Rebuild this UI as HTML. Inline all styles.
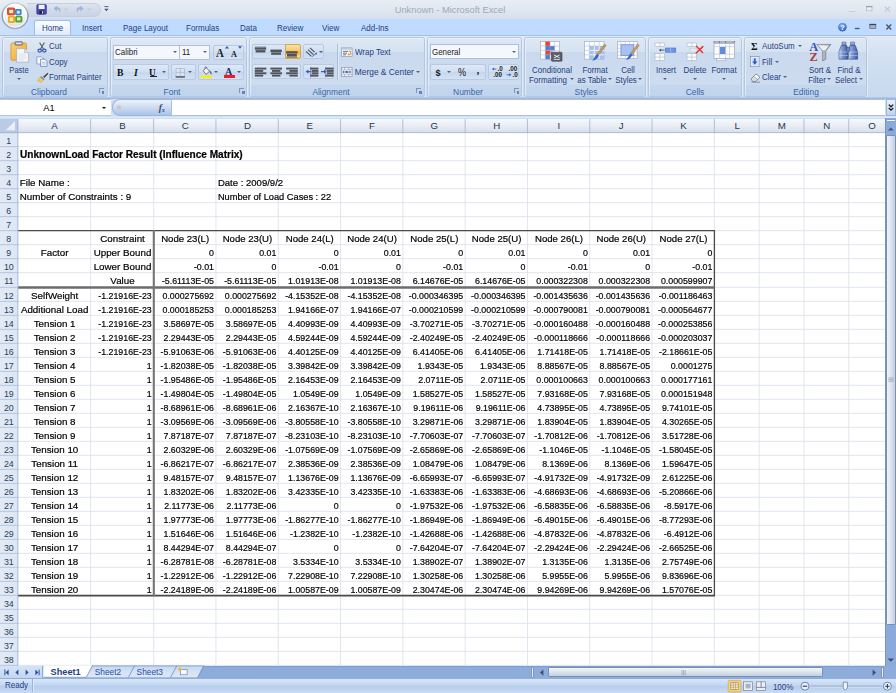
<!DOCTYPE html>
<html lang="en"><head><meta charset="utf-8"><title>Unknown - Microsoft Excel</title>
<style>
html,body{margin:0;padding:0;background:#fff;}
body{width:896px;height:693px;overflow:hidden;font-family:"Liberation Sans",sans-serif;}
#app{position:relative;width:896px;height:693px;overflow:hidden;background:#bfd6f5;font-family:"Liberation Sans",sans-serif;font-size:9.3px;color:#1d3c78;}
#app div,#app span,#app svg{position:absolute;box-sizing:border-box;}
.t{white-space:nowrap;line-height:11px;height:11px;}
.c{text-align:center;}
/* title bar */
#title{left:0;top:0;width:896px;height:19px;background:linear-gradient(#e9eef5,#dfe6f0 60%,#d5dfec);}
#titletxt{left:349.5px;top:4.4px;width:200px;text-align:center;color:#a2a8b3;font-size:9.7px;transform:scaleX(0.965);}
#qat{left:27px;top:2.6px;width:73.8px;height:14px;border-radius:0 7px 7px 0;background:linear-gradient(#dfe5ef,#d1dae8 50%,#cad4e4);border:0.7px solid #c6cfdd;border-left:none;}
/* tab row */
#tabs{left:0;top:18.8px;width:896px;height:17.5px;background:linear-gradient(90deg,#cfe1f9 0,#bfdbff 40px);}
#hometab{left:33.6px;top:19.8px;width:37.2px;height:17px;border-radius:2.5px 2.5px 0 0;background:linear-gradient(#fbfdff,#e9f1fb 60%,#dbe7f6);border:0.7px solid #a3bde0;border-bottom:none;}
.tab{top:23.0px;color:#1e3f82;font-size:8.5px;transform:scaleX(0.94);transform-origin:0 50%;}
/* ribbon */
#ribbon{left:0;top:35.2px;width:896px;height:63.3px;background:linear-gradient(#e0e9f6,#d3e1f2 30%,#c7d9ef);border-top:0.7px solid #a7c0e2;}
#ribbot{left:0;top:97.3px;width:896px;height:2.5px;background:linear-gradient(#c2d5ee 0,#9fb8dd 40%,#a3bbdf 60%,#d9e5f5 85%,#e3edf9);}
.grp{top:37.2px;height:59.8px;border:0.7px solid #b4c8e2;border-radius:2.5px;background:linear-gradient(#dee8f5 0,#d5e2f1 24%,#cad9ed 25%,#cddcef 80%,#c4d7ee 81%,#c0d4ed 100%);box-shadow:0.7px 0 0 #e9f0f9, inset 0.7px 0.7px 0 #edf3fa;}
.glab{top:86.9px;height:10px;line-height:10px;font-size:8.4px;color:#3a64a6;text-align:center;white-space:nowrap;}
.lnch{top:88.0px;width:5.2px;height:5.2px;border-left:0.8px solid #7d95be;border-top:0.8px solid #7d95be;}
.lnch:after{content:"";position:absolute;left:2.0px;top:2.0px;width:2.5px;height:2.5px;background:#6a84b4;}
.box{border:0.7px solid #b7c9e3;border-radius:2px;background:linear-gradient(#dfe9f6,#cfdef1 50%,#c6d7ee 51%,#d3e2f4);}
.wbox{border:0.7px solid #adc1df;background:#fff;}
.arr{width:0;height:0;border-left:2px solid transparent;border-right:2px solid transparent;border-top:2.3px solid #4a5f85;}
.sep{width:0.7px;background:#a9bfdd;box-shadow:0.7px 0 0 #e8f0fa;}
/* formula bar */
#fbar{left:0;top:100px;width:896px;height:19px;background:#cddff5;}
#namebox{left:0;top:99.3px;width:110.8px;height:16.5px;background:#fff;border-top:0.6px solid #b3c7e4;border-bottom:0.6px solid #b3c7e4;}
#fhandle{left:111.5px;top:99.3px;width:59.4px;height:16.5px;border-radius:8px 0 0 8px;background:linear-gradient(#eef3fb,#cfdef2 45%,#a9c4e9);border:0.7px solid #9db5d9;border-right:none;}
#finput{left:170.9px;top:99.3px;width:714.6px;height:16.5px;background:#fff;border:0.7px solid #a9c0e0;border-right:none;}
#fexp{left:885.5px;top:99.3px;width:10.5px;height:16.5px;background:linear-gradient(#e8f0fa,#c0d4ee);border:0.7px solid #9db5d9;}
#fgap{left:0;top:115.7px;width:896px;height:2.2px;background:linear-gradient(#cfe0f5,#e1ebf8);}
/* scrollbars */
#vsb{left:885px;top:117.6px;width:11px;height:548.2px;background:#8ba9da;border-left:0.8px solid #7893c4;}
#vthumb{left:886.3px;top:135px;width:9.7px;height:490px;background:linear-gradient(90deg,#f0f4f9,#dfe6ef 45%,#c5d0df);border:0.7px solid #7b90b6;border-radius:1.5px;}
#tabbar{left:0;top:665.6px;width:885px;height:12.4px;background:#8dabdb;border-top:0.7px solid #7f9ccf;}
#tabnav{left:0;top:665.6px;width:42px;height:12.4px;background:linear-gradient(#d5e3f6,#c3d6ef);}
#hthumb{left:547.5px;top:667.2px;width:275px;height:10px;background:linear-gradient(#f3f6fa,#dde5ee 50%,#c3cfdf);border:0.7px solid #7b90b6;border-radius:1.5px;}
#corner{left:885px;top:665.6px;width:11px;height:12.4px;background:#8dabdb;}
/* status bar */
#status{left:0;top:677.9px;width:896px;height:15.1px;background:linear-gradient(#d9e6f8,#c3d7f1 45%,#b5cdee 50%,#c9dcf4);border-top:0.7px solid #93afd9;}

</style></head>
<body>
<div id="app">
<svg id="grid" width="896" height="693" viewBox="0 0 896 693" style="position:absolute;left:0;top:0" font-family="Liberation Sans, sans-serif">
<defs><linearGradient id="chg" x1="0" y1="0" x2="0" y2="1"><stop offset="0" stop-color="#f9fbfd"/><stop offset="0.55" stop-color="#e8edf5"/><stop offset="1" stop-color="#d6deea"/></linearGradient><linearGradient id="rhg" x1="0" y1="0" x2="1" y2="0"><stop offset="0" stop-color="#e2eaf6"/><stop offset="1" stop-color="#dde6f3"/></linearGradient><filter id="tb" x="-2%" y="-2%" width="104%" height="104%"><feGaussianBlur stdDeviation="0.33"/></filter></defs>
<rect x="0" y="117.6" width="885.0" height="548.1999999999999" fill="#fff"/>
<rect x="0" y="117.6" width="885.0" height="15.400000000000006" fill="url(#chg)"/>
<rect x="0" y="133.0" width="18.2" height="532.8" fill="url(#rhg)"/>
<rect x="0" y="117.6" width="18.2" height="15.400000000000006" fill="#b9cbe6"/>
<path d="M15.0,121.1 L15.0,130.2 L5.799999999999999,130.2 Z" fill="#e9eef7"/>
<path d="M90.65,133.0 V665.8 M153.65,133.0 V665.8 M215.95,133.0 V665.8 M278.25,133.0 V665.8 M340.55,133.0 V665.8 M402.85,133.0 V665.8 M465.15,133.0 V665.8 M527.45,133.0 V665.8 M589.75,133.0 V665.8 M652.05,133.0 V665.8 M714.35,133.0 V665.8 M759.15,133.0 V665.8 M803.95,133.0 V665.8 M848.75,133.0 V665.8 M18.2,146.65 H885.0 M18.2,160.65 H885.0 M18.2,174.65 H885.0 M18.2,188.65 H885.0 M18.2,202.65 H885.0 M18.2,216.65 H885.0 M18.2,230.65 H885.0 M18.2,244.65 H885.0 M18.2,258.65 H885.0 M18.2,272.65 H885.0 M18.2,287.35 H885.0 M18.2,301.35 H885.0 M18.2,315.35 H885.0 M18.2,329.35 H885.0 M18.2,343.35 H885.0 M18.2,357.35 H885.0 M18.2,371.35 H885.0 M18.2,385.35 H885.0 M18.2,399.35 H885.0 M18.2,413.35 H885.0 M18.2,427.35 H885.0 M18.2,441.35 H885.0 M18.2,455.35 H885.0 M18.2,469.35 H885.0 M18.2,483.35 H885.0 M18.2,497.35 H885.0 M18.2,511.35 H885.0 M18.2,525.35 H885.0 M18.2,539.35 H885.0 M18.2,553.35 H885.0 M18.2,567.35 H885.0 M18.2,581.35 H885.0 M18.2,595.35 H885.0 M18.2,609.35 H885.0 M18.2,623.35 H885.0 M18.2,637.35 H885.0 M18.2,651.35 H885.0 M18.2,665.35 H885.0" stroke="#d9dfea" stroke-width="0.8" fill="none"/>
<path d="M17.85,118.6 V133.0 M90.65,118.6 V133.0 M153.65,118.6 V133.0 M215.95,118.6 V133.0 M278.25,118.6 V133.0 M340.55,118.6 V133.0 M402.85,118.6 V133.0 M465.15,118.6 V133.0 M527.45,118.6 V133.0 M589.75,118.6 V133.0 M652.05,118.6 V133.0 M714.35,118.6 V133.0 M759.15,118.6 V133.0 M803.95,118.6 V133.0 M848.75,118.6 V133.0" stroke="#9fb3d1" stroke-width="0.8" fill="none"/>
<path d="M0,132.65 H18.2 M0,146.65 H18.2 M0,160.65 H18.2 M0,174.65 H18.2 M0,188.65 H18.2 M0,202.65 H18.2 M0,216.65 H18.2 M0,230.65 H18.2 M0,244.65 H18.2 M0,258.65 H18.2 M0,272.65 H18.2 M0,287.35 H18.2 M0,301.35 H18.2 M0,315.35 H18.2 M0,329.35 H18.2 M0,343.35 H18.2 M0,357.35 H18.2 M0,371.35 H18.2 M0,385.35 H18.2 M0,399.35 H18.2 M0,413.35 H18.2 M0,427.35 H18.2 M0,441.35 H18.2 M0,455.35 H18.2 M0,469.35 H18.2 M0,483.35 H18.2 M0,497.35 H18.2 M0,511.35 H18.2 M0,525.35 H18.2 M0,539.35 H18.2 M0,553.35 H18.2 M0,567.35 H18.2 M0,581.35 H18.2 M0,595.35 H18.2 M0,609.35 H18.2 M0,623.35 H18.2 M0,637.35 H18.2 M0,651.35 H18.2 M0,665.35 H18.2" stroke="#a9bddb" stroke-width="0.8" fill="none"/>
<path d="M0,132.65 H885.0 M17.849999999999998,133.0 V665.8" stroke="#9fb3d1" stroke-width="0.8" fill="none"/>
<path d="M0,118.0 H885.0" stroke="#a5bbdc" stroke-width="0.8" fill="none"/>
<text transform="translate(54.60 129.40) scale(1.0 1)" font-size="9.7" fill="#24364f" text-anchor="middle">A</text>
<text transform="translate(122.50 129.40) scale(1.0 1)" font-size="9.7" fill="#24364f" text-anchor="middle">B</text>
<text transform="translate(185.15 129.40) scale(1.0 1)" font-size="9.7" fill="#24364f" text-anchor="middle">C</text>
<text transform="translate(247.45 129.40) scale(1.0 1)" font-size="9.7" fill="#24364f" text-anchor="middle">D</text>
<text transform="translate(309.75 129.40) scale(1.0 1)" font-size="9.7" fill="#24364f" text-anchor="middle">E</text>
<text transform="translate(372.05 129.40) scale(1.0 1)" font-size="9.7" fill="#24364f" text-anchor="middle">F</text>
<text transform="translate(434.35 129.40) scale(1.0 1)" font-size="9.7" fill="#24364f" text-anchor="middle">G</text>
<text transform="translate(496.65 129.40) scale(1.0 1)" font-size="9.7" fill="#24364f" text-anchor="middle">H</text>
<text transform="translate(558.95 129.40) scale(1.0 1)" font-size="9.7" fill="#24364f" text-anchor="middle">I</text>
<text transform="translate(621.25 129.40) scale(1.0 1)" font-size="9.7" fill="#24364f" text-anchor="middle">J</text>
<text transform="translate(683.55 129.40) scale(1.0 1)" font-size="9.7" fill="#24364f" text-anchor="middle">K</text>
<text transform="translate(737.10 129.40) scale(1.0 1)" font-size="9.7" fill="#24364f" text-anchor="middle">L</text>
<text transform="translate(781.90 129.40) scale(1.0 1)" font-size="9.7" fill="#24364f" text-anchor="middle">M</text>
<text transform="translate(826.70 129.40) scale(1.0 1)" font-size="9.7" fill="#24364f" text-anchor="middle">N</text>
<text transform="translate(872.00 129.40) scale(1.0 1)" font-size="9.7" fill="#24364f" text-anchor="middle">O</text>
<text transform="translate(8.80 144.30) scale(0.91 1)" font-size="9.7" fill="#2b3f5c" text-anchor="middle">1</text>
<text transform="translate(8.80 158.30) scale(0.91 1)" font-size="9.7" fill="#2b3f5c" text-anchor="middle">2</text>
<text transform="translate(8.80 172.30) scale(0.91 1)" font-size="9.7" fill="#2b3f5c" text-anchor="middle">3</text>
<text transform="translate(8.80 186.30) scale(0.91 1)" font-size="9.7" fill="#2b3f5c" text-anchor="middle">4</text>
<text transform="translate(8.80 200.30) scale(0.91 1)" font-size="9.7" fill="#2b3f5c" text-anchor="middle">5</text>
<text transform="translate(8.80 214.30) scale(0.91 1)" font-size="9.7" fill="#2b3f5c" text-anchor="middle">6</text>
<text transform="translate(8.80 228.30) scale(0.91 1)" font-size="9.7" fill="#2b3f5c" text-anchor="middle">7</text>
<text transform="translate(8.80 242.30) scale(0.91 1)" font-size="9.7" fill="#2b3f5c" text-anchor="middle">8</text>
<text transform="translate(8.80 256.30) scale(0.91 1)" font-size="9.7" fill="#2b3f5c" text-anchor="middle">9</text>
<text transform="translate(8.80 270.30) scale(0.91 1)" font-size="9.7" fill="#2b3f5c" text-anchor="middle">10</text>
<text transform="translate(8.80 284.30) scale(0.91 1)" font-size="9.7" fill="#2b3f5c" text-anchor="middle">11</text>
<text transform="translate(8.80 299.00) scale(0.91 1)" font-size="9.7" fill="#2b3f5c" text-anchor="middle">12</text>
<text transform="translate(8.80 313.00) scale(0.91 1)" font-size="9.7" fill="#2b3f5c" text-anchor="middle">13</text>
<text transform="translate(8.80 327.00) scale(0.91 1)" font-size="9.7" fill="#2b3f5c" text-anchor="middle">14</text>
<text transform="translate(8.80 341.00) scale(0.91 1)" font-size="9.7" fill="#2b3f5c" text-anchor="middle">15</text>
<text transform="translate(8.80 355.00) scale(0.91 1)" font-size="9.7" fill="#2b3f5c" text-anchor="middle">16</text>
<text transform="translate(8.80 369.00) scale(0.91 1)" font-size="9.7" fill="#2b3f5c" text-anchor="middle">17</text>
<text transform="translate(8.80 383.00) scale(0.91 1)" font-size="9.7" fill="#2b3f5c" text-anchor="middle">18</text>
<text transform="translate(8.80 397.00) scale(0.91 1)" font-size="9.7" fill="#2b3f5c" text-anchor="middle">19</text>
<text transform="translate(8.80 411.00) scale(0.91 1)" font-size="9.7" fill="#2b3f5c" text-anchor="middle">20</text>
<text transform="translate(8.80 425.00) scale(0.91 1)" font-size="9.7" fill="#2b3f5c" text-anchor="middle">21</text>
<text transform="translate(8.80 439.00) scale(0.91 1)" font-size="9.7" fill="#2b3f5c" text-anchor="middle">22</text>
<text transform="translate(8.80 453.00) scale(0.91 1)" font-size="9.7" fill="#2b3f5c" text-anchor="middle">23</text>
<text transform="translate(8.80 467.00) scale(0.91 1)" font-size="9.7" fill="#2b3f5c" text-anchor="middle">24</text>
<text transform="translate(8.80 481.00) scale(0.91 1)" font-size="9.7" fill="#2b3f5c" text-anchor="middle">25</text>
<text transform="translate(8.80 495.00) scale(0.91 1)" font-size="9.7" fill="#2b3f5c" text-anchor="middle">26</text>
<text transform="translate(8.80 509.00) scale(0.91 1)" font-size="9.7" fill="#2b3f5c" text-anchor="middle">27</text>
<text transform="translate(8.80 523.00) scale(0.91 1)" font-size="9.7" fill="#2b3f5c" text-anchor="middle">28</text>
<text transform="translate(8.80 537.00) scale(0.91 1)" font-size="9.7" fill="#2b3f5c" text-anchor="middle">29</text>
<text transform="translate(8.80 551.00) scale(0.91 1)" font-size="9.7" fill="#2b3f5c" text-anchor="middle">30</text>
<text transform="translate(8.80 565.00) scale(0.91 1)" font-size="9.7" fill="#2b3f5c" text-anchor="middle">31</text>
<text transform="translate(8.80 579.00) scale(0.91 1)" font-size="9.7" fill="#2b3f5c" text-anchor="middle">32</text>
<text transform="translate(8.80 593.00) scale(0.91 1)" font-size="9.7" fill="#2b3f5c" text-anchor="middle">33</text>
<text transform="translate(8.80 607.00) scale(0.91 1)" font-size="9.7" fill="#2b3f5c" text-anchor="middle">34</text>
<text transform="translate(8.80 621.00) scale(0.91 1)" font-size="9.7" fill="#2b3f5c" text-anchor="middle">35</text>
<text transform="translate(8.80 635.00) scale(0.91 1)" font-size="9.7" fill="#2b3f5c" text-anchor="middle">36</text>
<text transform="translate(8.80 649.00) scale(0.91 1)" font-size="9.7" fill="#2b3f5c" text-anchor="middle">37</text>
<text transform="translate(8.80 663.00) scale(0.91 1)" font-size="9.7" fill="#2b3f5c" text-anchor="middle">38</text>
<path d="M18.2,230.6 H714.6999999999999" stroke="#4a4a4a" stroke-width="1.4" fill="none"/>
<path d="M18.2,595.6 H714.6999999999999" stroke="#4a4a4a" stroke-width="1.6" fill="none"/>
<path d="M714.4,230.0 V596.3000000000001" stroke="#4a4a4a" stroke-width="1.3" fill="none"/>
<path d="M18.2,287.55 H714.6999999999999" stroke="#6c6c6c" stroke-width="2.4" fill="none"/>
<path d="M153.8,230.0 V596.3000000000001" stroke="#757575" stroke-width="2.1" fill="none"/>
<g filter="url(#tb)" stroke="#000" stroke-width="0.22" stroke-opacity="0.9">
<text transform="translate(20.00 158.30) scale(1.008 1)" font-size="10.0" fill="#000" text-anchor="start" font-weight="bold">UnknownLoad Factor Result (Influence Matrix)</text>
<text transform="translate(19.80 186.30) scale(1.02 1)" font-size="9.6" fill="#000" text-anchor="start">File Name :</text>
<text transform="translate(217.90 186.30) scale(0.995 1)" font-size="9.6" fill="#000" text-anchor="start">Date : 2009/9/2</text>
<text transform="translate(19.80 200.30) scale(1.02 1)" font-size="9.6" fill="#000" text-anchor="start">Number of Constraints : 9</text>
<text transform="translate(217.90 200.30) scale(0.965 1)" font-size="9.6" fill="#000" text-anchor="start">Number of Load Cases : 22</text>
<text transform="translate(122.50 242.30) scale(1.02 1)" font-size="9.6" fill="#000" text-anchor="middle">Constraint</text>
<text transform="translate(54.60 256.30) scale(1.02 1)" font-size="9.6" fill="#000" text-anchor="middle">Factor</text>
<text transform="translate(122.50 256.30) scale(1.02 1)" font-size="9.6" fill="#000" text-anchor="middle">Upper Bound</text>
<text transform="translate(122.50 270.30) scale(1.02 1)" font-size="9.6" fill="#000" text-anchor="middle">Lower Bound</text>
<text transform="translate(122.50 284.30) scale(1.02 1)" font-size="9.6" fill="#000" text-anchor="middle">Value</text>
<text transform="translate(185.15 242.30) scale(1.0 1)" font-size="9.6" fill="#000" text-anchor="middle">Node 23(L)</text>
<text transform="translate(214.00 256.30) scale(0.901 1)" font-size="9.8" fill="#000" text-anchor="end">0</text>
<text transform="translate(214.00 270.30) scale(0.901 1)" font-size="9.8" fill="#000" text-anchor="end">-0.01</text>
<text transform="translate(214.00 284.30) scale(0.901 1)" font-size="9.8" fill="#000" text-anchor="end">-5.61113E-05</text>
<text transform="translate(247.45 242.30) scale(1.0 1)" font-size="9.6" fill="#000" text-anchor="middle">Node 23(U)</text>
<text transform="translate(276.30 256.30) scale(0.901 1)" font-size="9.8" fill="#000" text-anchor="end">0.01</text>
<text transform="translate(276.30 270.30) scale(0.901 1)" font-size="9.8" fill="#000" text-anchor="end">0</text>
<text transform="translate(276.30 284.30) scale(0.901 1)" font-size="9.8" fill="#000" text-anchor="end">-5.61113E-05</text>
<text transform="translate(309.75 242.30) scale(1.0 1)" font-size="9.6" fill="#000" text-anchor="middle">Node 24(L)</text>
<text transform="translate(338.60 256.30) scale(0.901 1)" font-size="9.8" fill="#000" text-anchor="end">0</text>
<text transform="translate(338.60 270.30) scale(0.901 1)" font-size="9.8" fill="#000" text-anchor="end">-0.01</text>
<text transform="translate(338.60 284.30) scale(0.901 1)" font-size="9.8" fill="#000" text-anchor="end">1.01913E-08</text>
<text transform="translate(372.05 242.30) scale(1.0 1)" font-size="9.6" fill="#000" text-anchor="middle">Node 24(U)</text>
<text transform="translate(400.90 256.30) scale(0.901 1)" font-size="9.8" fill="#000" text-anchor="end">0.01</text>
<text transform="translate(400.90 270.30) scale(0.901 1)" font-size="9.8" fill="#000" text-anchor="end">0</text>
<text transform="translate(400.90 284.30) scale(0.901 1)" font-size="9.8" fill="#000" text-anchor="end">1.01913E-08</text>
<text transform="translate(434.35 242.30) scale(1.0 1)" font-size="9.6" fill="#000" text-anchor="middle">Node 25(L)</text>
<text transform="translate(463.20 256.30) scale(0.901 1)" font-size="9.8" fill="#000" text-anchor="end">0</text>
<text transform="translate(463.20 270.30) scale(0.901 1)" font-size="9.8" fill="#000" text-anchor="end">-0.01</text>
<text transform="translate(463.20 284.30) scale(0.901 1)" font-size="9.8" fill="#000" text-anchor="end">6.14676E-05</text>
<text transform="translate(496.65 242.30) scale(1.0 1)" font-size="9.6" fill="#000" text-anchor="middle">Node 25(U)</text>
<text transform="translate(525.50 256.30) scale(0.901 1)" font-size="9.8" fill="#000" text-anchor="end">0.01</text>
<text transform="translate(525.50 270.30) scale(0.901 1)" font-size="9.8" fill="#000" text-anchor="end">0</text>
<text transform="translate(525.50 284.30) scale(0.901 1)" font-size="9.8" fill="#000" text-anchor="end">6.14676E-05</text>
<text transform="translate(558.95 242.30) scale(1.0 1)" font-size="9.6" fill="#000" text-anchor="middle">Node 26(L)</text>
<text transform="translate(587.80 256.30) scale(0.901 1)" font-size="9.8" fill="#000" text-anchor="end">0</text>
<text transform="translate(587.80 270.30) scale(0.901 1)" font-size="9.8" fill="#000" text-anchor="end">-0.01</text>
<text transform="translate(587.80 284.30) scale(0.901 1)" font-size="9.8" fill="#000" text-anchor="end">0.000322308</text>
<text transform="translate(621.25 242.30) scale(1.0 1)" font-size="9.6" fill="#000" text-anchor="middle">Node 26(U)</text>
<text transform="translate(650.10 256.30) scale(0.901 1)" font-size="9.8" fill="#000" text-anchor="end">0.01</text>
<text transform="translate(650.10 270.30) scale(0.901 1)" font-size="9.8" fill="#000" text-anchor="end">0</text>
<text transform="translate(650.10 284.30) scale(0.901 1)" font-size="9.8" fill="#000" text-anchor="end">0.000322308</text>
<text transform="translate(683.55 242.30) scale(1.0 1)" font-size="9.6" fill="#000" text-anchor="middle">Node 27(L)</text>
<text transform="translate(712.40 256.30) scale(0.901 1)" font-size="9.8" fill="#000" text-anchor="end">0</text>
<text transform="translate(712.40 270.30) scale(0.901 1)" font-size="9.8" fill="#000" text-anchor="end">-0.01</text>
<text transform="translate(712.40 284.30) scale(0.901 1)" font-size="9.8" fill="#000" text-anchor="end">0.000599907</text>
<text transform="translate(54.60 299.00) scale(1.02 1)" font-size="9.6" fill="#000" text-anchor="middle">SelfWeight</text>
<text transform="translate(151.70 299.00) scale(0.901 1)" font-size="9.8" fill="#000" text-anchor="end">-1.21916E-23</text>
<text transform="translate(214.00 299.00) scale(0.901 1)" font-size="9.8" fill="#000" text-anchor="end">0.000275692</text>
<text transform="translate(276.30 299.00) scale(0.901 1)" font-size="9.8" fill="#000" text-anchor="end">0.000275692</text>
<text transform="translate(338.60 299.00) scale(0.901 1)" font-size="9.8" fill="#000" text-anchor="end">-4.15352E-08</text>
<text transform="translate(400.90 299.00) scale(0.901 1)" font-size="9.8" fill="#000" text-anchor="end">-4.15352E-08</text>
<text transform="translate(463.20 299.00) scale(0.901 1)" font-size="9.8" fill="#000" text-anchor="end">-0.000346395</text>
<text transform="translate(525.50 299.00) scale(0.901 1)" font-size="9.8" fill="#000" text-anchor="end">-0.000346395</text>
<text transform="translate(587.80 299.00) scale(0.901 1)" font-size="9.8" fill="#000" text-anchor="end">-0.001435636</text>
<text transform="translate(650.10 299.00) scale(0.901 1)" font-size="9.8" fill="#000" text-anchor="end">-0.001435636</text>
<text transform="translate(712.40 299.00) scale(0.901 1)" font-size="9.8" fill="#000" text-anchor="end">-0.001186463</text>
<text transform="translate(54.60 313.00) scale(1.02 1)" font-size="9.6" fill="#000" text-anchor="middle">Additional Load</text>
<text transform="translate(151.70 313.00) scale(0.901 1)" font-size="9.8" fill="#000" text-anchor="end">-1.21916E-23</text>
<text transform="translate(214.00 313.00) scale(0.901 1)" font-size="9.8" fill="#000" text-anchor="end">0.000185253</text>
<text transform="translate(276.30 313.00) scale(0.901 1)" font-size="9.8" fill="#000" text-anchor="end">0.000185253</text>
<text transform="translate(338.60 313.00) scale(0.901 1)" font-size="9.8" fill="#000" text-anchor="end">1.94166E-07</text>
<text transform="translate(400.90 313.00) scale(0.901 1)" font-size="9.8" fill="#000" text-anchor="end">1.94166E-07</text>
<text transform="translate(463.20 313.00) scale(0.901 1)" font-size="9.8" fill="#000" text-anchor="end">-0.000210599</text>
<text transform="translate(525.50 313.00) scale(0.901 1)" font-size="9.8" fill="#000" text-anchor="end">-0.000210599</text>
<text transform="translate(587.80 313.00) scale(0.901 1)" font-size="9.8" fill="#000" text-anchor="end">-0.000790081</text>
<text transform="translate(650.10 313.00) scale(0.901 1)" font-size="9.8" fill="#000" text-anchor="end">-0.000790081</text>
<text transform="translate(712.40 313.00) scale(0.901 1)" font-size="9.8" fill="#000" text-anchor="end">-0.000564677</text>
<text transform="translate(54.60 327.00) scale(1.02 1)" font-size="9.6" fill="#000" text-anchor="middle">Tension 1</text>
<text transform="translate(151.70 327.00) scale(0.901 1)" font-size="9.8" fill="#000" text-anchor="end">-1.21916E-23</text>
<text transform="translate(214.00 327.00) scale(0.901 1)" font-size="9.8" fill="#000" text-anchor="end">3.58697E-05</text>
<text transform="translate(276.30 327.00) scale(0.901 1)" font-size="9.8" fill="#000" text-anchor="end">3.58697E-05</text>
<text transform="translate(338.60 327.00) scale(0.901 1)" font-size="9.8" fill="#000" text-anchor="end">4.40993E-09</text>
<text transform="translate(400.90 327.00) scale(0.901 1)" font-size="9.8" fill="#000" text-anchor="end">4.40993E-09</text>
<text transform="translate(463.20 327.00) scale(0.901 1)" font-size="9.8" fill="#000" text-anchor="end">-3.70271E-05</text>
<text transform="translate(525.50 327.00) scale(0.901 1)" font-size="9.8" fill="#000" text-anchor="end">-3.70271E-05</text>
<text transform="translate(587.80 327.00) scale(0.901 1)" font-size="9.8" fill="#000" text-anchor="end">-0.000160488</text>
<text transform="translate(650.10 327.00) scale(0.901 1)" font-size="9.8" fill="#000" text-anchor="end">-0.000160488</text>
<text transform="translate(712.40 327.00) scale(0.901 1)" font-size="9.8" fill="#000" text-anchor="end">-0.000253856</text>
<text transform="translate(54.60 341.00) scale(1.02 1)" font-size="9.6" fill="#000" text-anchor="middle">Tension 2</text>
<text transform="translate(151.70 341.00) scale(0.901 1)" font-size="9.8" fill="#000" text-anchor="end">-1.21916E-23</text>
<text transform="translate(214.00 341.00) scale(0.901 1)" font-size="9.8" fill="#000" text-anchor="end">2.29443E-05</text>
<text transform="translate(276.30 341.00) scale(0.901 1)" font-size="9.8" fill="#000" text-anchor="end">2.29443E-05</text>
<text transform="translate(338.60 341.00) scale(0.901 1)" font-size="9.8" fill="#000" text-anchor="end">4.59244E-09</text>
<text transform="translate(400.90 341.00) scale(0.901 1)" font-size="9.8" fill="#000" text-anchor="end">4.59244E-09</text>
<text transform="translate(463.20 341.00) scale(0.901 1)" font-size="9.8" fill="#000" text-anchor="end">-2.40249E-05</text>
<text transform="translate(525.50 341.00) scale(0.901 1)" font-size="9.8" fill="#000" text-anchor="end">-2.40249E-05</text>
<text transform="translate(587.80 341.00) scale(0.901 1)" font-size="9.8" fill="#000" text-anchor="end">-0.000118666</text>
<text transform="translate(650.10 341.00) scale(0.901 1)" font-size="9.8" fill="#000" text-anchor="end">-0.000118666</text>
<text transform="translate(712.40 341.00) scale(0.901 1)" font-size="9.8" fill="#000" text-anchor="end">-0.000203037</text>
<text transform="translate(54.60 355.00) scale(1.02 1)" font-size="9.6" fill="#000" text-anchor="middle">Tension 3</text>
<text transform="translate(151.70 355.00) scale(0.901 1)" font-size="9.8" fill="#000" text-anchor="end">-1.21916E-23</text>
<text transform="translate(214.00 355.00) scale(0.901 1)" font-size="9.8" fill="#000" text-anchor="end">-5.91063E-06</text>
<text transform="translate(276.30 355.00) scale(0.901 1)" font-size="9.8" fill="#000" text-anchor="end">-5.91063E-06</text>
<text transform="translate(338.60 355.00) scale(0.901 1)" font-size="9.8" fill="#000" text-anchor="end">4.40125E-09</text>
<text transform="translate(400.90 355.00) scale(0.901 1)" font-size="9.8" fill="#000" text-anchor="end">4.40125E-09</text>
<text transform="translate(463.20 355.00) scale(0.901 1)" font-size="9.8" fill="#000" text-anchor="end">6.41405E-06</text>
<text transform="translate(525.50 355.00) scale(0.901 1)" font-size="9.8" fill="#000" text-anchor="end">6.41405E-06</text>
<text transform="translate(587.80 355.00) scale(0.901 1)" font-size="9.8" fill="#000" text-anchor="end">1.71418E-05</text>
<text transform="translate(650.10 355.00) scale(0.901 1)" font-size="9.8" fill="#000" text-anchor="end">1.71418E-05</text>
<text transform="translate(712.40 355.00) scale(0.901 1)" font-size="9.8" fill="#000" text-anchor="end">-2.18661E-05</text>
<text transform="translate(54.60 369.00) scale(1.02 1)" font-size="9.6" fill="#000" text-anchor="middle">Tension 4</text>
<text transform="translate(151.70 369.00) scale(0.901 1)" font-size="9.8" fill="#000" text-anchor="end">1</text>
<text transform="translate(214.00 369.00) scale(0.901 1)" font-size="9.8" fill="#000" text-anchor="end">-1.82038E-05</text>
<text transform="translate(276.30 369.00) scale(0.901 1)" font-size="9.8" fill="#000" text-anchor="end">-1.82038E-05</text>
<text transform="translate(338.60 369.00) scale(0.901 1)" font-size="9.8" fill="#000" text-anchor="end">3.39842E-09</text>
<text transform="translate(400.90 369.00) scale(0.901 1)" font-size="9.8" fill="#000" text-anchor="end">3.39842E-09</text>
<text transform="translate(463.20 369.00) scale(0.901 1)" font-size="9.8" fill="#000" text-anchor="end">1.9343E-05</text>
<text transform="translate(525.50 369.00) scale(0.901 1)" font-size="9.8" fill="#000" text-anchor="end">1.9343E-05</text>
<text transform="translate(587.80 369.00) scale(0.901 1)" font-size="9.8" fill="#000" text-anchor="end">8.88567E-05</text>
<text transform="translate(650.10 369.00) scale(0.901 1)" font-size="9.8" fill="#000" text-anchor="end">8.88567E-05</text>
<text transform="translate(712.40 369.00) scale(0.901 1)" font-size="9.8" fill="#000" text-anchor="end">0.0001275</text>
<text transform="translate(54.60 383.00) scale(1.02 1)" font-size="9.6" fill="#000" text-anchor="middle">Tension 5</text>
<text transform="translate(151.70 383.00) scale(0.901 1)" font-size="9.8" fill="#000" text-anchor="end">1</text>
<text transform="translate(214.00 383.00) scale(0.901 1)" font-size="9.8" fill="#000" text-anchor="end">-1.95486E-05</text>
<text transform="translate(276.30 383.00) scale(0.901 1)" font-size="9.8" fill="#000" text-anchor="end">-1.95486E-05</text>
<text transform="translate(338.60 383.00) scale(0.901 1)" font-size="9.8" fill="#000" text-anchor="end">2.16453E-09</text>
<text transform="translate(400.90 383.00) scale(0.901 1)" font-size="9.8" fill="#000" text-anchor="end">2.16453E-09</text>
<text transform="translate(463.20 383.00) scale(0.901 1)" font-size="9.8" fill="#000" text-anchor="end">2.0711E-05</text>
<text transform="translate(525.50 383.00) scale(0.901 1)" font-size="9.8" fill="#000" text-anchor="end">2.0711E-05</text>
<text transform="translate(587.80 383.00) scale(0.901 1)" font-size="9.8" fill="#000" text-anchor="end">0.000100663</text>
<text transform="translate(650.10 383.00) scale(0.901 1)" font-size="9.8" fill="#000" text-anchor="end">0.000100663</text>
<text transform="translate(712.40 383.00) scale(0.901 1)" font-size="9.8" fill="#000" text-anchor="end">0.000177161</text>
<text transform="translate(54.60 397.00) scale(1.02 1)" font-size="9.6" fill="#000" text-anchor="middle">Tension 6</text>
<text transform="translate(151.70 397.00) scale(0.901 1)" font-size="9.8" fill="#000" text-anchor="end">1</text>
<text transform="translate(214.00 397.00) scale(0.901 1)" font-size="9.8" fill="#000" text-anchor="end">-1.49804E-05</text>
<text transform="translate(276.30 397.00) scale(0.901 1)" font-size="9.8" fill="#000" text-anchor="end">-1.49804E-05</text>
<text transform="translate(338.60 397.00) scale(0.901 1)" font-size="9.8" fill="#000" text-anchor="end">1.0549E-09</text>
<text transform="translate(400.90 397.00) scale(0.901 1)" font-size="9.8" fill="#000" text-anchor="end">1.0549E-09</text>
<text transform="translate(463.20 397.00) scale(0.901 1)" font-size="9.8" fill="#000" text-anchor="end">1.58527E-05</text>
<text transform="translate(525.50 397.00) scale(0.901 1)" font-size="9.8" fill="#000" text-anchor="end">1.58527E-05</text>
<text transform="translate(587.80 397.00) scale(0.901 1)" font-size="9.8" fill="#000" text-anchor="end">7.93168E-05</text>
<text transform="translate(650.10 397.00) scale(0.901 1)" font-size="9.8" fill="#000" text-anchor="end">7.93168E-05</text>
<text transform="translate(712.40 397.00) scale(0.901 1)" font-size="9.8" fill="#000" text-anchor="end">0.000151948</text>
<text transform="translate(54.60 411.00) scale(1.02 1)" font-size="9.6" fill="#000" text-anchor="middle">Tension 7</text>
<text transform="translate(151.70 411.00) scale(0.901 1)" font-size="9.8" fill="#000" text-anchor="end">1</text>
<text transform="translate(214.00 411.00) scale(0.901 1)" font-size="9.8" fill="#000" text-anchor="end">-8.68961E-06</text>
<text transform="translate(276.30 411.00) scale(0.901 1)" font-size="9.8" fill="#000" text-anchor="end">-8.68961E-06</text>
<text transform="translate(338.60 411.00) scale(0.901 1)" font-size="9.8" fill="#000" text-anchor="end">2.16367E-10</text>
<text transform="translate(400.90 411.00) scale(0.901 1)" font-size="9.8" fill="#000" text-anchor="end">2.16367E-10</text>
<text transform="translate(463.20 411.00) scale(0.901 1)" font-size="9.8" fill="#000" text-anchor="end">9.19611E-06</text>
<text transform="translate(525.50 411.00) scale(0.901 1)" font-size="9.8" fill="#000" text-anchor="end">9.19611E-06</text>
<text transform="translate(587.80 411.00) scale(0.901 1)" font-size="9.8" fill="#000" text-anchor="end">4.73895E-05</text>
<text transform="translate(650.10 411.00) scale(0.901 1)" font-size="9.8" fill="#000" text-anchor="end">4.73895E-05</text>
<text transform="translate(712.40 411.00) scale(0.901 1)" font-size="9.8" fill="#000" text-anchor="end">9.74101E-05</text>
<text transform="translate(54.60 425.00) scale(1.02 1)" font-size="9.6" fill="#000" text-anchor="middle">Tension 8</text>
<text transform="translate(151.70 425.00) scale(0.901 1)" font-size="9.8" fill="#000" text-anchor="end">1</text>
<text transform="translate(214.00 425.00) scale(0.901 1)" font-size="9.8" fill="#000" text-anchor="end">-3.09569E-06</text>
<text transform="translate(276.30 425.00) scale(0.901 1)" font-size="9.8" fill="#000" text-anchor="end">-3.09569E-06</text>
<text transform="translate(338.60 425.00) scale(0.901 1)" font-size="9.8" fill="#000" text-anchor="end">-3.80558E-10</text>
<text transform="translate(400.90 425.00) scale(0.901 1)" font-size="9.8" fill="#000" text-anchor="end">-3.80558E-10</text>
<text transform="translate(463.20 425.00) scale(0.901 1)" font-size="9.8" fill="#000" text-anchor="end">3.29871E-06</text>
<text transform="translate(525.50 425.00) scale(0.901 1)" font-size="9.8" fill="#000" text-anchor="end">3.29871E-06</text>
<text transform="translate(587.80 425.00) scale(0.901 1)" font-size="9.8" fill="#000" text-anchor="end">1.83904E-05</text>
<text transform="translate(650.10 425.00) scale(0.901 1)" font-size="9.8" fill="#000" text-anchor="end">1.83904E-05</text>
<text transform="translate(712.40 425.00) scale(0.901 1)" font-size="9.8" fill="#000" text-anchor="end">4.30265E-05</text>
<text transform="translate(54.60 439.00) scale(1.02 1)" font-size="9.6" fill="#000" text-anchor="middle">Tension 9</text>
<text transform="translate(151.70 439.00) scale(0.901 1)" font-size="9.8" fill="#000" text-anchor="end">1</text>
<text transform="translate(214.00 439.00) scale(0.901 1)" font-size="9.8" fill="#000" text-anchor="end">7.87187E-07</text>
<text transform="translate(276.30 439.00) scale(0.901 1)" font-size="9.8" fill="#000" text-anchor="end">7.87187E-07</text>
<text transform="translate(338.60 439.00) scale(0.901 1)" font-size="9.8" fill="#000" text-anchor="end">-8.23103E-10</text>
<text transform="translate(400.90 439.00) scale(0.901 1)" font-size="9.8" fill="#000" text-anchor="end">-8.23103E-10</text>
<text transform="translate(463.20 439.00) scale(0.901 1)" font-size="9.8" fill="#000" text-anchor="end">-7.70603E-07</text>
<text transform="translate(525.50 439.00) scale(0.901 1)" font-size="9.8" fill="#000" text-anchor="end">-7.70603E-07</text>
<text transform="translate(587.80 439.00) scale(0.901 1)" font-size="9.8" fill="#000" text-anchor="end">-1.70812E-06</text>
<text transform="translate(650.10 439.00) scale(0.901 1)" font-size="9.8" fill="#000" text-anchor="end">-1.70812E-06</text>
<text transform="translate(712.40 439.00) scale(0.901 1)" font-size="9.8" fill="#000" text-anchor="end">3.51728E-06</text>
<text transform="translate(54.60 453.00) scale(1.02 1)" font-size="9.6" fill="#000" text-anchor="middle">Tension 10</text>
<text transform="translate(151.70 453.00) scale(0.901 1)" font-size="9.8" fill="#000" text-anchor="end">1</text>
<text transform="translate(214.00 453.00) scale(0.901 1)" font-size="9.8" fill="#000" text-anchor="end">2.60329E-06</text>
<text transform="translate(276.30 453.00) scale(0.901 1)" font-size="9.8" fill="#000" text-anchor="end">2.60329E-06</text>
<text transform="translate(338.60 453.00) scale(0.901 1)" font-size="9.8" fill="#000" text-anchor="end">-1.07569E-09</text>
<text transform="translate(400.90 453.00) scale(0.901 1)" font-size="9.8" fill="#000" text-anchor="end">-1.07569E-09</text>
<text transform="translate(463.20 453.00) scale(0.901 1)" font-size="9.8" fill="#000" text-anchor="end">-2.65869E-06</text>
<text transform="translate(525.50 453.00) scale(0.901 1)" font-size="9.8" fill="#000" text-anchor="end">-2.65869E-06</text>
<text transform="translate(587.80 453.00) scale(0.901 1)" font-size="9.8" fill="#000" text-anchor="end">-1.1046E-05</text>
<text transform="translate(650.10 453.00) scale(0.901 1)" font-size="9.8" fill="#000" text-anchor="end">-1.1046E-05</text>
<text transform="translate(712.40 453.00) scale(0.901 1)" font-size="9.8" fill="#000" text-anchor="end">-1.58045E-05</text>
<text transform="translate(54.60 467.00) scale(1.02 1)" font-size="9.6" fill="#000" text-anchor="middle">Tension 11</text>
<text transform="translate(151.70 467.00) scale(0.901 1)" font-size="9.8" fill="#000" text-anchor="end">1</text>
<text transform="translate(214.00 467.00) scale(0.901 1)" font-size="9.8" fill="#000" text-anchor="end">-6.86217E-07</text>
<text transform="translate(276.30 467.00) scale(0.901 1)" font-size="9.8" fill="#000" text-anchor="end">-6.86217E-07</text>
<text transform="translate(338.60 467.00) scale(0.901 1)" font-size="9.8" fill="#000" text-anchor="end">2.38536E-09</text>
<text transform="translate(400.90 467.00) scale(0.901 1)" font-size="9.8" fill="#000" text-anchor="end">2.38536E-09</text>
<text transform="translate(463.20 467.00) scale(0.901 1)" font-size="9.8" fill="#000" text-anchor="end">1.08479E-06</text>
<text transform="translate(525.50 467.00) scale(0.901 1)" font-size="9.8" fill="#000" text-anchor="end">1.08479E-06</text>
<text transform="translate(587.80 467.00) scale(0.901 1)" font-size="9.8" fill="#000" text-anchor="end">8.1369E-06</text>
<text transform="translate(650.10 467.00) scale(0.901 1)" font-size="9.8" fill="#000" text-anchor="end">8.1369E-06</text>
<text transform="translate(712.40 467.00) scale(0.901 1)" font-size="9.8" fill="#000" text-anchor="end">1.59647E-05</text>
<text transform="translate(54.60 481.00) scale(1.02 1)" font-size="9.6" fill="#000" text-anchor="middle">Tension 12</text>
<text transform="translate(151.70 481.00) scale(0.901 1)" font-size="9.8" fill="#000" text-anchor="end">1</text>
<text transform="translate(214.00 481.00) scale(0.901 1)" font-size="9.8" fill="#000" text-anchor="end">9.48157E-07</text>
<text transform="translate(276.30 481.00) scale(0.901 1)" font-size="9.8" fill="#000" text-anchor="end">9.48157E-07</text>
<text transform="translate(338.60 481.00) scale(0.901 1)" font-size="9.8" fill="#000" text-anchor="end">1.13676E-09</text>
<text transform="translate(400.90 481.00) scale(0.901 1)" font-size="9.8" fill="#000" text-anchor="end">1.13676E-09</text>
<text transform="translate(463.20 481.00) scale(0.901 1)" font-size="9.8" fill="#000" text-anchor="end">-6.65993E-07</text>
<text transform="translate(525.50 481.00) scale(0.901 1)" font-size="9.8" fill="#000" text-anchor="end">-6.65993E-07</text>
<text transform="translate(587.80 481.00) scale(0.901 1)" font-size="9.8" fill="#000" text-anchor="end">-4.91732E-09</text>
<text transform="translate(650.10 481.00) scale(0.901 1)" font-size="9.8" fill="#000" text-anchor="end">-4.91732E-09</text>
<text transform="translate(712.40 481.00) scale(0.901 1)" font-size="9.8" fill="#000" text-anchor="end">2.61225E-06</text>
<text transform="translate(54.60 495.00) scale(1.02 1)" font-size="9.6" fill="#000" text-anchor="middle">Tension 13</text>
<text transform="translate(151.70 495.00) scale(0.901 1)" font-size="9.8" fill="#000" text-anchor="end">1</text>
<text transform="translate(214.00 495.00) scale(0.901 1)" font-size="9.8" fill="#000" text-anchor="end">1.83202E-06</text>
<text transform="translate(276.30 495.00) scale(0.901 1)" font-size="9.8" fill="#000" text-anchor="end">1.83202E-06</text>
<text transform="translate(338.60 495.00) scale(0.901 1)" font-size="9.8" fill="#000" text-anchor="end">3.42335E-10</text>
<text transform="translate(400.90 495.00) scale(0.901 1)" font-size="9.8" fill="#000" text-anchor="end">3.42335E-10</text>
<text transform="translate(463.20 495.00) scale(0.901 1)" font-size="9.8" fill="#000" text-anchor="end">-1.63383E-06</text>
<text transform="translate(525.50 495.00) scale(0.901 1)" font-size="9.8" fill="#000" text-anchor="end">-1.63383E-06</text>
<text transform="translate(587.80 495.00) scale(0.901 1)" font-size="9.8" fill="#000" text-anchor="end">-4.68693E-06</text>
<text transform="translate(650.10 495.00) scale(0.901 1)" font-size="9.8" fill="#000" text-anchor="end">-4.68693E-06</text>
<text transform="translate(712.40 495.00) scale(0.901 1)" font-size="9.8" fill="#000" text-anchor="end">-5.20866E-06</text>
<text transform="translate(54.60 509.00) scale(1.02 1)" font-size="9.6" fill="#000" text-anchor="middle">Tension 14</text>
<text transform="translate(151.70 509.00) scale(0.901 1)" font-size="9.8" fill="#000" text-anchor="end">1</text>
<text transform="translate(214.00 509.00) scale(0.901 1)" font-size="9.8" fill="#000" text-anchor="end">2.11773E-06</text>
<text transform="translate(276.30 509.00) scale(0.901 1)" font-size="9.8" fill="#000" text-anchor="end">2.11773E-06</text>
<text transform="translate(338.60 509.00) scale(0.901 1)" font-size="9.8" fill="#000" text-anchor="end">0</text>
<text transform="translate(400.90 509.00) scale(0.901 1)" font-size="9.8" fill="#000" text-anchor="end">0</text>
<text transform="translate(463.20 509.00) scale(0.901 1)" font-size="9.8" fill="#000" text-anchor="end">-1.97532E-06</text>
<text transform="translate(525.50 509.00) scale(0.901 1)" font-size="9.8" fill="#000" text-anchor="end">-1.97532E-06</text>
<text transform="translate(587.80 509.00) scale(0.901 1)" font-size="9.8" fill="#000" text-anchor="end">-6.58835E-06</text>
<text transform="translate(650.10 509.00) scale(0.901 1)" font-size="9.8" fill="#000" text-anchor="end">-6.58835E-06</text>
<text transform="translate(712.40 509.00) scale(0.901 1)" font-size="9.8" fill="#000" text-anchor="end">-8.5917E-06</text>
<text transform="translate(54.60 523.00) scale(1.02 1)" font-size="9.6" fill="#000" text-anchor="middle">Tension 15</text>
<text transform="translate(151.70 523.00) scale(0.901 1)" font-size="9.8" fill="#000" text-anchor="end">1</text>
<text transform="translate(214.00 523.00) scale(0.901 1)" font-size="9.8" fill="#000" text-anchor="end">1.97773E-06</text>
<text transform="translate(276.30 523.00) scale(0.901 1)" font-size="9.8" fill="#000" text-anchor="end">1.97773E-06</text>
<text transform="translate(338.60 523.00) scale(0.901 1)" font-size="9.8" fill="#000" text-anchor="end">-1.86277E-10</text>
<text transform="translate(400.90 523.00) scale(0.901 1)" font-size="9.8" fill="#000" text-anchor="end">-1.86277E-10</text>
<text transform="translate(463.20 523.00) scale(0.901 1)" font-size="9.8" fill="#000" text-anchor="end">-1.86949E-06</text>
<text transform="translate(525.50 523.00) scale(0.901 1)" font-size="9.8" fill="#000" text-anchor="end">-1.86949E-06</text>
<text transform="translate(587.80 523.00) scale(0.901 1)" font-size="9.8" fill="#000" text-anchor="end">-6.49015E-06</text>
<text transform="translate(650.10 523.00) scale(0.901 1)" font-size="9.8" fill="#000" text-anchor="end">-6.49015E-06</text>
<text transform="translate(712.40 523.00) scale(0.901 1)" font-size="9.8" fill="#000" text-anchor="end">-8.77293E-06</text>
<text transform="translate(54.60 537.00) scale(1.02 1)" font-size="9.6" fill="#000" text-anchor="middle">Tension 16</text>
<text transform="translate(151.70 537.00) scale(0.901 1)" font-size="9.8" fill="#000" text-anchor="end">1</text>
<text transform="translate(214.00 537.00) scale(0.901 1)" font-size="9.8" fill="#000" text-anchor="end">1.51646E-06</text>
<text transform="translate(276.30 537.00) scale(0.901 1)" font-size="9.8" fill="#000" text-anchor="end">1.51646E-06</text>
<text transform="translate(338.60 537.00) scale(0.901 1)" font-size="9.8" fill="#000" text-anchor="end">-1.2382E-10</text>
<text transform="translate(400.90 537.00) scale(0.901 1)" font-size="9.8" fill="#000" text-anchor="end">-1.2382E-10</text>
<text transform="translate(463.20 537.00) scale(0.901 1)" font-size="9.8" fill="#000" text-anchor="end">-1.42688E-06</text>
<text transform="translate(525.50 537.00) scale(0.901 1)" font-size="9.8" fill="#000" text-anchor="end">-1.42688E-06</text>
<text transform="translate(587.80 537.00) scale(0.901 1)" font-size="9.8" fill="#000" text-anchor="end">-4.87832E-06</text>
<text transform="translate(650.10 537.00) scale(0.901 1)" font-size="9.8" fill="#000" text-anchor="end">-4.87832E-06</text>
<text transform="translate(712.40 537.00) scale(0.901 1)" font-size="9.8" fill="#000" text-anchor="end">-6.4912E-06</text>
<text transform="translate(54.60 551.00) scale(1.02 1)" font-size="9.6" fill="#000" text-anchor="middle">Tension 17</text>
<text transform="translate(151.70 551.00) scale(0.901 1)" font-size="9.8" fill="#000" text-anchor="end">1</text>
<text transform="translate(214.00 551.00) scale(0.901 1)" font-size="9.8" fill="#000" text-anchor="end">8.44294E-07</text>
<text transform="translate(276.30 551.00) scale(0.901 1)" font-size="9.8" fill="#000" text-anchor="end">8.44294E-07</text>
<text transform="translate(338.60 551.00) scale(0.901 1)" font-size="9.8" fill="#000" text-anchor="end">0</text>
<text transform="translate(400.90 551.00) scale(0.901 1)" font-size="9.8" fill="#000" text-anchor="end">0</text>
<text transform="translate(463.20 551.00) scale(0.901 1)" font-size="9.8" fill="#000" text-anchor="end">-7.64204E-07</text>
<text transform="translate(525.50 551.00) scale(0.901 1)" font-size="9.8" fill="#000" text-anchor="end">-7.64204E-07</text>
<text transform="translate(587.80 551.00) scale(0.901 1)" font-size="9.8" fill="#000" text-anchor="end">-2.29424E-06</text>
<text transform="translate(650.10 551.00) scale(0.901 1)" font-size="9.8" fill="#000" text-anchor="end">-2.29424E-06</text>
<text transform="translate(712.40 551.00) scale(0.901 1)" font-size="9.8" fill="#000" text-anchor="end">-2.66525E-06</text>
<text transform="translate(54.60 565.00) scale(1.02 1)" font-size="9.6" fill="#000" text-anchor="middle">Tension 18</text>
<text transform="translate(151.70 565.00) scale(0.901 1)" font-size="9.8" fill="#000" text-anchor="end">1</text>
<text transform="translate(214.00 565.00) scale(0.901 1)" font-size="9.8" fill="#000" text-anchor="end">-6.28781E-08</text>
<text transform="translate(276.30 565.00) scale(0.901 1)" font-size="9.8" fill="#000" text-anchor="end">-6.28781E-08</text>
<text transform="translate(338.60 565.00) scale(0.901 1)" font-size="9.8" fill="#000" text-anchor="end">3.5334E-10</text>
<text transform="translate(400.90 565.00) scale(0.901 1)" font-size="9.8" fill="#000" text-anchor="end">3.5334E-10</text>
<text transform="translate(463.20 565.00) scale(0.901 1)" font-size="9.8" fill="#000" text-anchor="end">1.38902E-07</text>
<text transform="translate(525.50 565.00) scale(0.901 1)" font-size="9.8" fill="#000" text-anchor="end">1.38902E-07</text>
<text transform="translate(587.80 565.00) scale(0.901 1)" font-size="9.8" fill="#000" text-anchor="end">1.3135E-06</text>
<text transform="translate(650.10 565.00) scale(0.901 1)" font-size="9.8" fill="#000" text-anchor="end">1.3135E-06</text>
<text transform="translate(712.40 565.00) scale(0.901 1)" font-size="9.8" fill="#000" text-anchor="end">2.75749E-06</text>
<text transform="translate(54.60 579.00) scale(1.02 1)" font-size="9.6" fill="#000" text-anchor="middle">Tension 19</text>
<text transform="translate(151.70 579.00) scale(0.901 1)" font-size="9.8" fill="#000" text-anchor="end">1</text>
<text transform="translate(214.00 579.00) scale(0.901 1)" font-size="9.8" fill="#000" text-anchor="end">-1.22912E-06</text>
<text transform="translate(276.30 579.00) scale(0.901 1)" font-size="9.8" fill="#000" text-anchor="end">-1.22912E-06</text>
<text transform="translate(338.60 579.00) scale(0.901 1)" font-size="9.8" fill="#000" text-anchor="end">7.22908E-10</text>
<text transform="translate(400.90 579.00) scale(0.901 1)" font-size="9.8" fill="#000" text-anchor="end">7.22908E-10</text>
<text transform="translate(463.20 579.00) scale(0.901 1)" font-size="9.8" fill="#000" text-anchor="end">1.30258E-06</text>
<text transform="translate(525.50 579.00) scale(0.901 1)" font-size="9.8" fill="#000" text-anchor="end">1.30258E-06</text>
<text transform="translate(587.80 579.00) scale(0.901 1)" font-size="9.8" fill="#000" text-anchor="end">5.9955E-06</text>
<text transform="translate(650.10 579.00) scale(0.901 1)" font-size="9.8" fill="#000" text-anchor="end">5.9955E-06</text>
<text transform="translate(712.40 579.00) scale(0.901 1)" font-size="9.8" fill="#000" text-anchor="end">9.83696E-06</text>
<text transform="translate(54.60 593.00) scale(1.02 1)" font-size="9.6" fill="#000" text-anchor="middle">Tension 20</text>
<text transform="translate(151.70 593.00) scale(0.901 1)" font-size="9.8" fill="#000" text-anchor="end">1</text>
<text transform="translate(214.00 593.00) scale(0.901 1)" font-size="9.8" fill="#000" text-anchor="end">-2.24189E-06</text>
<text transform="translate(276.30 593.00) scale(0.901 1)" font-size="9.8" fill="#000" text-anchor="end">-2.24189E-06</text>
<text transform="translate(338.60 593.00) scale(0.901 1)" font-size="9.8" fill="#000" text-anchor="end">1.00587E-09</text>
<text transform="translate(400.90 593.00) scale(0.901 1)" font-size="9.8" fill="#000" text-anchor="end">1.00587E-09</text>
<text transform="translate(463.20 593.00) scale(0.901 1)" font-size="9.8" fill="#000" text-anchor="end">2.30474E-06</text>
<text transform="translate(525.50 593.00) scale(0.901 1)" font-size="9.8" fill="#000" text-anchor="end">2.30474E-06</text>
<text transform="translate(587.80 593.00) scale(0.901 1)" font-size="9.8" fill="#000" text-anchor="end">9.94269E-06</text>
<text transform="translate(650.10 593.00) scale(0.901 1)" font-size="9.8" fill="#000" text-anchor="end">9.94269E-06</text>
<text transform="translate(712.40 593.00) scale(0.901 1)" font-size="9.8" fill="#000" text-anchor="end">1.57076E-05</text>
</g>
</svg>
<!-- ===== title bar ===== -->
<div id="title"></div>
<div id="qat"></div>

<!-- office button -->
<svg style="left:0px;top:1px;z-index:5" width="32" height="32" viewBox="0 0 32 32">
<defs>
<radialGradient id="ob" cx="0.5" cy="0.3" r="0.8"><stop offset="0" stop-color="#ffffff"/><stop offset="0.5" stop-color="#f3f5f9"/><stop offset="0.78" stop-color="#d9dee8"/><stop offset="1" stop-color="#b3bccb"/></radialGradient>
<linearGradient id="obr" x1="0" y1="0" x2="0" y2="1"><stop offset="0" stop-color="#c9ced8"/><stop offset="0.5" stop-color="#8b929f"/><stop offset="1" stop-color="#a7aebb"/></linearGradient>
</defs>
<circle cx="15.1" cy="14.7" r="12.9" fill="url(#ob)" stroke="url(#obr)" stroke-width="1.3"/>
<circle cx="15.1" cy="14.7" r="11.4" fill="none" stroke="#ffffff" stroke-width="0.9" opacity="0.95"/>
<g>
<rect x="7" y="6.6" width="8.2" height="7.6" rx="1.6" fill="#dd4f27"/><rect x="9.2" y="8.8" width="4" height="3.4" fill="#f9e3d6"/>
<rect x="15" y="8" width="6.6" height="6.2" rx="1.4" fill="#3a86dc"/><rect x="16.8" y="9.8" width="3" height="2.8" fill="#d6e8fb"/>
<rect x="8" y="14.6" width="7" height="7.4" rx="1.5" fill="#f5a920"/><rect x="9.8" y="16.6" width="3.2" height="3.4" fill="#fdeec6"/>
<rect x="15.2" y="14.8" width="7.2" height="6.6" rx="1.5" fill="#56a32a"/><rect x="17" y="16.4" width="3.4" height="3" fill="#dbf0c8"/>
</g>
</svg>
<!-- QAT icons -->
<svg style="left:35px;top:3px" width="80" height="14" viewBox="0 0 80 14">
<rect x="1.8" y="1.6" width="9.6" height="9.6" rx="0.8" fill="#4a47b8" stroke="#2a2a86" stroke-width="0.6"/>
<rect x="3.6" y="1.8" width="6" height="4.2" fill="#f4f5fb"/><rect x="4.4" y="7.6" width="4.6" height="3.6" fill="#23234f"/><rect x="7" y="8.2" width="1.2" height="2.4" fill="#d9dbf0"/>
<path d="M18.6,5.4 L21.8,2.4 V4.2 C25.4,4 26.6,6.6 24.6,10.2 C25.2,7.6 24,6.4 21.8,6.6 V8.4 Z" fill="#9db4dc"/>
<path d="M29.4,6.2 H33" stroke="#b4c3dc" stroke-width="0.8"/>
<path d="M48.6,5.4 L45.4,2.4 V4.2 C41.8,4 40.6,6.6 42.6,10.2 C42,7.6 43.2,6.4 45.4,6.6 V8.4 Z" fill="#9db4dc"/>
<path d="M52.4,6.2 H56" stroke="#b4c3dc" stroke-width="0.8"/>
<path d="M69.4,3.6 H73.4" stroke="#3c5488" stroke-width="0.9"/><path d="M69.2,5.8 H73.6 L71.4,8.2 Z" fill="#3c5488"/>
</svg>
<!-- window controls (title) -->
<svg style="left:840px;top:2px" width="56" height="16" viewBox="0 0 56 16">
<path d="M9,9.2 H15.4" stroke="#c3c8d1" stroke-width="1.3"/><path d="M9,8.2 H15.4" stroke="#f4f6f9" stroke-width="0.8"/>
<rect x="26.4" y="4.6" width="5.6" height="4.2" fill="#eceff4" stroke="#b9bec8" stroke-width="0.8"/><path d="M26,4.6 H32.4" stroke="#9a9fa9" stroke-width="1.3"/>
<path d="M44.8,4.6 L50,9.6 M50,4.6 L44.8,9.6" stroke="#c3c8d1" stroke-width="1.3"/>
</svg>
<div id="titletxt" class="t">Unknown - Microsoft Excel</div>
<!-- ===== tab row ===== -->
<div id="tabs"></div>
<div id="hometab"></div>
<div class="t tab" style="left:42px">Home</div>
<div class="t tab" style="left:82px">Insert</div>
<div class="t tab" style="left:123px">Page Layout</div>
<div class="t tab" style="left:186px">Formulas</div>
<div class="t tab" style="left:240px">Data</div>
<div class="t tab" style="left:277px">Review</div>
<div class="t tab" style="left:322px">View</div>
<div class="t tab" style="left:361px">Add-Ins</div>

<!-- help + mdi controls -->
<svg style="left:834px;top:20px" width="62" height="16" viewBox="0 0 62 16">
<defs><radialGradient id="hp" cx="0.4" cy="0.3" r="0.8"><stop offset="0" stop-color="#7fb0f2"/><stop offset="1" stop-color="#1b4fb4"/></radialGradient></defs>
<circle cx="8.4" cy="7.2" r="4.8" fill="url(#hp)" stroke="#d4e3f8" stroke-width="0.9"/>
<text x="8.4" y="9.9" font-size="7.4" font-family="Liberation Sans" font-weight="bold" text-anchor="middle" fill="#fff">?</text>
<path d="M20.8,8.5 H25.6" stroke="#4d5668" stroke-width="1.3"/>
<rect x="35.8" y="4.6" width="6" height="4" fill="#a9b2c4" stroke="#5e6679" stroke-width="0.7"/><path d="M35.5,4.5 H42.1" stroke="#3f4656" stroke-width="1.3"/>
<path d="M52.4,4.6 L57.2,9.4 M57.2,4.6 L52.4,9.4" stroke="#4d5668" stroke-width="1.4"/>
</svg>
<!-- ===== ribbon ===== -->
<div id="ribbon"></div>
<div id="ribbot"></div>
<div class="grp" style="left:1.6px;width:106px"></div>
<div class="grp" style="left:110px;width:137.3px"></div>
<div class="grp" style="left:249.3px;width:176px"></div>
<div class="grp" style="left:427.4px;width:94.6px"></div>
<div class="grp" style="left:524.4px;width:121.4px"></div>
<div class="grp" style="left:648px;width:94px"></div>
<div class="grp" style="left:744.3px;width:123px"></div>
<div class="glab" style="left:19px;width:60px">Clipboard</div>
<div class="glab" style="left:142px;width:60px">Font</div>
<div class="glab" style="left:301px;width:60px">Alignment</div>
<div class="glab" style="left:438px;width:60px">Number</div>
<div class="glab" style="left:556px;width:60px">Styles</div>
<div class="glab" style="left:665px;width:60px">Cells</div>
<div class="glab" style="left:776px;width:60px">Editing</div>
<div class="lnch" style="left:98.5px"></div>
<div class="lnch" style="left:239px"></div>
<div class="lnch" style="left:416px"></div>
<div class="lnch" style="left:513.5px"></div>
<svg style="left:10px;top:40.5px" width="20" height="22" viewBox="0 0 20 22"><defs><linearGradient id="pg" x1="0" y1="0" x2="1" y2="1"><stop offset="0" stop-color="#fad071"/><stop offset="1" stop-color="#eda936"/></linearGradient></defs><rect x="0.9" y="2" width="15.6" height="17.2" rx="1.3" fill="url(#pg)" stroke="#c98f34" stroke-width="0.7"/><rect x="4.8" y="0.6" width="7.8" height="3.6" rx="0.8" fill="#9a9ca6" stroke="#6d6f78" stroke-width="0.6"/><rect x="6" y="1.8" width="5.4" height="1.2" fill="#e8eaf0"/><path d="M6.6,7.6 H14.6 L18.6,11.6 V21.2 H6.6 Z" fill="#f3f5f9" stroke="#a2abbb" stroke-width="0.7"/><path d="M14.6,7.6 V11.6 H18.6" fill="#dfe4ec" stroke="#a2abbb" stroke-width="0.6"/><path d="M8.6,13 H16 M8.6,15 H16 M8.6,17 H16 M8.6,19 H14" stroke="#d5dae3" stroke-width="0.7"/></svg>
<div class="t" style="top:65.49px;font-size:8.4px;color:#1f3f80;left:-0.70px;width:40px;text-align:center;transform:scaleX(0.9);transform-origin:50% 50%;">Paste</div>
<div class="arr" style="left:17.20px;top:78.05px;border-left-width:2.1px;border-right-width:2.1px;border-top-width:2.3px;border-top-color:#4f648c"></div>
<svg style="left:37px;top:41.5px" width="10" height="11" viewBox="0 0 10 11"><path d="M2.6,0.6 L6.6,7.2 M7.4,0.6 L3.4,7.2" stroke="#5d6470" stroke-width="1.1" fill="none"/><ellipse cx="2.7" cy="8.6" rx="1.7" ry="1.5" fill="none" stroke="#2f55b0" stroke-width="1.2"/><ellipse cx="7.3" cy="8.6" rx="1.7" ry="1.5" fill="none" stroke="#2f55b0" stroke-width="1.2"/></svg>
<div class="t" style="top:41.49px;font-size:8.4px;color:#1f3f80;left:49.40px;transform:scaleX(0.95);transform-origin:0 50%;">Cut</div>
<svg style="left:36px;top:55.5px" width="12" height="11" viewBox="0 0 12 11"><path d="M0.9,0.8 H5.4 L7.4,2.8 V8 H0.9 Z" fill="#f6f8fc" stroke="#6f8cc0" stroke-width="0.7"/><path d="M4.6,3.2 H9 L11,5.2 V10.4 H4.6 Z" fill="#f6f8fc" stroke="#4f72b4" stroke-width="0.7"/><path d="M6,6.4 H9.6 M6,8 H9.6" stroke="#7d9ad0" stroke-width="0.6"/></svg>
<div class="t" style="top:56.79px;font-size:8.4px;color:#1f3f80;left:49.40px;transform:scaleX(0.95);transform-origin:0 50%;">Copy</div>
<svg style="left:36.5px;top:71.5px" width="12" height="11" viewBox="0 0 12 11"><path d="M6.2,4.6 L10.6,0.8 L11.4,1.8 L7.4,6 Z" fill="#4a4350"/><path d="M4.2,4 L7.8,7 L6.6,8.2 L3,5.2 Z" fill="#8a8f9c"/><path d="M3,5.2 L6.6,8.2 L4.2,10.4 L0.6,8.8 Z" fill="#f0cf55" stroke="#c9a233" stroke-width="0.5"/></svg>
<div class="t" style="top:72.29px;font-size:8.4px;color:#1f3f80;left:49.40px;transform:scaleX(0.95);transform-origin:0 50%;">Format Painter</div>
<div class="wbox" style="left:112.8px;top:44.5px;width:67.50px;height:15.00px;background:#f4f8fd;"></div>
<div class="wbox" style="left:180.3px;top:44.5px;width:29.90px;height:15.00px;background:#f4f8fd;border-left:none;"></div>
<div class="t" style="top:47.29px;font-size:8.4px;color:#222;left:115.40px;transform:scaleX(0.95);transform-origin:0 50%;">Calibri</div>
<div class="t" style="top:47.29px;font-size:8.4px;color:#222;left:182.40px;transform:scaleX(0.95);transform-origin:0 50%;">11</div>
<div class="arr" style="left:173.10px;top:50.85px;border-left-width:2.1px;border-right-width:2.1px;border-top-width:2.3px;border-top-color:#4f648c"></div>
<div class="arr" style="left:203.20px;top:50.85px;border-left-width:2.1px;border-right-width:2.1px;border-top-width:2.3px;border-top-color:#4f648c"></div>
<div class="box" style="left:213.4px;top:44.5px;width:31.00px;height:15.00px;"></div>
<div class="t" style="top:47.82px;font-size:11.5px;color:#222;font-weight:bold;left:216.00px;transform:scaleX(0.95);transform-origin:0 50%;font-family:'Liberation Serif',serif;">A</div>
<div class="t" style="top:48.82px;font-size:8.6px;color:#222;font-weight:bold;left:231.00px;transform:scaleX(0.95);transform-origin:0 50%;font-family:'Liberation Serif',serif;">A</div>
<svg style="left:224.5px;top:46.4px" width="4" height="3" viewBox="0 0 4 3"><path d="M0,2.6 L2,0 L4,2.6 Z" fill="#2d59b5"/></svg>
<svg style="left:238.3px;top:46.4px" width="4" height="3" viewBox="0 0 4 3"><path d="M0,0.2 L2,2.8 L4,0.2 Z" fill="#2d59b5"/></svg>
<div class="box" style="left:113px;top:64.3px;width:55.60px;height:15.30px;"></div>
<div class="t" style="top:67.37px;font-size:10.2px;color:#111;font-weight:bold;left:117.40px;transform:scaleX(0.95);transform-origin:0 50%;font-family:'Liberation Serif',serif;">B</div>
<div class="t" style="top:67.37px;font-size:10.2px;color:#111;font-weight:bold;left:134.00px;transform:scaleX(0.95);transform-origin:0 50%;font-family:'Liberation Serif',serif;font-style:italic;">I</div>
<div class="t" style="top:67.30px;font-size:9.8px;color:#111;font-weight:bold;left:149.00px;transform:scaleX(0.95);transform-origin:0 50%;font-family:'Liberation Serif',serif;">U</div>
<div class="" style="left:149.6px;top:76.2px;width:7.20px;height:0.80px;background:#222;"></div>
<div class="arr" style="left:161.70px;top:70.85px;border-left-width:2.1px;border-right-width:2.1px;border-top-width:2.3px;border-top-color:#4f648c"></div>
<div class="box" style="left:171.4px;top:64.3px;width:24.20px;height:15.30px;"></div>
<svg style="left:174.6px;top:66.6px" width="11" height="11" viewBox="0 0 11 11"><rect x="1" y="1.4" width="8.6" height="8" fill="#dfe7f3" fill-opacity="0.6" stroke="#aab5ca" stroke-width="0.7"/><path d="M5.3,1.4 V9.4 M1,5.4 H9.6" stroke="#aab5ca" stroke-width="0.7"/><path d="M0.6,10 H10" stroke="#3b3f48" stroke-width="1.2"/></svg>
<div class="arr" style="left:188.30px;top:70.85px;border-left-width:2.1px;border-right-width:2.1px;border-top-width:2.3px;border-top-color:#4f648c"></div>
<div class="box" style="left:197.6px;top:64.3px;width:46.80px;height:15.30px;"></div>
<svg style="left:199.5px;top:65.5px" width="13" height="13" viewBox="0 0 13 13"><path d="M3.2,4.6 L6.4,1.8 L9.6,5.2 L6,8.4 Z" fill="#f7f8fb" stroke="#50576a" stroke-width="0.8"/><path d="M4.8,2.6 C4.4,0.6 6.6,0 6.8,2" fill="none" stroke="#50576a" stroke-width="0.7"/><path d="M9.4,4.6 C11.4,5.2 12,7 11.4,8.6 C10.2,8.2 9.8,6.6 9.4,4.6 Z" fill="#3560bd"/><rect x="0.6" y="9.4" width="11.6" height="2.8" fill="#f7ec1b"/></svg>
<div class="arr" style="left:214.20px;top:70.85px;border-left-width:2.1px;border-right-width:2.1px;border-top-width:2.3px;border-top-color:#4f648c"></div>
<div class="t" style="top:66.03px;font-size:10.6px;color:#1f2f66;font-weight:bold;left:224.60px;transform:scaleX(0.95);transform-origin:0 50%;font-family:'Liberation Serif',serif;">A</div>
<div class="" style="left:223.6px;top:74.9px;width:11.20px;height:2.70px;background:#ee1c25;"></div>
<div class="arr" style="left:237.20px;top:70.85px;border-left-width:2.1px;border-right-width:2.1px;border-top-width:2.3px;border-top-color:#4f648c"></div>
<div class="box" style="left:252.4px;top:44.3px;width:48.20px;height:15.00px;"></div>
<div class="" style="left:284.8px;top:44.3px;width:15.80px;height:15.00px;background:linear-gradient(#fde2a6,#fac766 45%,#f8b545 55%,#fcdc96);border:0.7px solid #d2a857;border-radius:0 2px 2px 0;"></div>
<svg style="left:254px;top:45.5px" width="46" height="13" viewBox="0 0 46 13"><g fill="#50545d"><rect x="0.8" y="1.3" width="11.4" height="2.4"/><rect x="1.6" y="4.1" width="9.8" height="2.4"/><rect x="16.4" y="3.6" width="11.4" height="2.4"/><rect x="17.2" y="6.4" width="9.8" height="2.4"/><rect x="32.2" y="5.2" width="11.4" height="2.4"/><rect x="33" y="8.0" width="9.8" height="2.6"/></g><rect x="0.8" y="0.4" width="11.4" height="0.7" fill="#98a0ae"/><rect x="32.2" y="11" width="11.4" height="0.7" fill="#7a6a45"/></svg>
<div class="box" style="left:302.6px;top:44.3px;width:21.80px;height:15.00px;"></div>
<svg style="left:305px;top:46.5px" width="13" height="11" viewBox="0 0 13 11"><path d="M1,4.4 L6.4,9.4 M3,2.6 L8.4,7.6 M5,0.8 L9.6,5.2" stroke="#4d525d" stroke-width="1.1" fill="none"/><path d="M7.2,9.6 L11.4,6.2" stroke="#4667b0" stroke-width="0.9"/><path d="M11.8,5.6 L11.6,8 L9.8,6.4 Z" fill="#4667b0"/></svg>
<div class="arr" style="left:318.90px;top:50.85px;border-left-width:2.1px;border-right-width:2.1px;border-top-width:2.3px;border-top-color:#4f648c"></div>
<div class="sep" style="left:337.2px;top:43.5px;width:0.70px;height:36.50px;"></div>
<svg style="left:341px;top:47px" width="12" height="10" viewBox="0 0 12 10"><rect x="0.5" y="0.9" width="10.6" height="8.4" fill="#f3f6fb" stroke="#8a98b3" stroke-width="0.7"/><rect x="0.5" y="0.9" width="10.6" height="1.7" fill="#b9c6dc"/><path d="M2,4.4 H7.4 M2,6.2 H6 M2,7.8 H5" stroke="#555b68" stroke-width="0.8"/><path d="M8,4.2 H9.6 V7.4 H7.6" stroke="#d88a1c" stroke-width="0.9" fill="none"/><path d="M8,6.2 L6.4,7.4 L8,8.6 Z" fill="#d88a1c"/></svg>
<div class="t" style="top:47.19px;font-size:8.4px;color:#1f3f80;left:354.80px;transform:scaleX(0.95);transform-origin:0 50%;">Wrap Text</div>
<div class="box" style="left:252.4px;top:64.1px;width:48.20px;height:15.10px;"></div>
<svg style="left:254px;top:65.5px" width="46" height="13" viewBox="0 0 46 13"><g fill="#50545d"><rect x="0.8" y="1.60" width="11.6" height="1.95"/><rect x="0.8" y="3.95" width="8.4" height="1.95"/><rect x="0.8" y="6.30" width="11.6" height="1.95"/><rect x="0.8" y="8.65" width="8.4" height="1.95"/><rect x="16.4" y="1.60" width="11.6" height="1.95"/><rect x="18.0" y="3.95" width="8.4" height="1.95"/><rect x="16.4" y="6.30" width="11.6" height="1.95"/><rect x="18.0" y="8.65" width="8.4" height="1.95"/><rect x="32.2" y="1.60" width="11.6" height="1.95"/><rect x="35.400000000000006" y="3.95" width="8.4" height="1.95"/><rect x="32.2" y="6.30" width="11.6" height="1.95"/><rect x="35.400000000000006" y="8.65" width="8.4" height="1.95"/></g></svg>
<div class="box" style="left:302.6px;top:64.1px;width:31.40px;height:15.10px;"></div>
<svg style="left:304.6px;top:65.5px" width="30" height="13" viewBox="0 0 30 13"><g fill="#50545d"><rect x="5.0" y="1.60" width="8.4" height="1.95"/><rect x="6.800000000000001" y="3.95" width="6.6" height="1.95"/><rect x="6.800000000000001" y="6.30" width="6.6" height="1.95"/><rect x="5.0" y="8.65" width="8.4" height="1.95"/><rect x="20.200000000000003" y="1.60" width="8.4" height="1.95"/><rect x="22.0" y="3.95" width="6.6" height="1.95"/><rect x="22.0" y="6.30" width="6.6" height="1.95"/><rect x="20.200000000000003" y="8.65" width="8.4" height="1.95"/></g><path d="M6.4,5.6 H2.8" stroke="#2f5fc6" stroke-width="1.2"/><path d="M0.6,5.6 L3.4,3.4 V7.8 Z" fill="#2f5fc6"/><path d="M16,5.6 H19.6" stroke="#2f5fc6" stroke-width="1.2"/><path d="M21.8,5.6 L19,3.4 V7.8 Z" fill="#2f5fc6"/><path d="M5.6,0.8 V11.4 M20.8,0.8 V11.4" stroke="#6d7480" stroke-width="0.7"/></svg>
<svg style="left:341px;top:66.5px" width="12" height="10" viewBox="0 0 12 10"><rect x="0.5" y="0.6" width="10.6" height="8.8" fill="#f3f6fb" stroke="#8a98b3" stroke-width="0.7"/><path d="M0.5,2.8 H11.1 M0.5,7.2 H11.1 M3.6,0.6 V2.8 M7.8,0.6 V2.8 M3.6,7.2 V9.4 M7.8,7.2 V9.4" stroke="#8a98b3" stroke-width="0.6"/><path d="M2.4,5 H9.2" stroke="#3565c8" stroke-width="0.9"/><path d="M1.2,5 L3,3.8 V6.2 Z M10.4,5 L8.6,3.8 V6.2 Z" fill="#3565c8"/><text x="5.8" y="6.4" font-size="3.6" font-family="Liberation Sans" text-anchor="middle" fill="#333" font-weight="bold">a</text></svg>
<div class="t" style="top:67.09px;font-size:8.4px;color:#1f3f80;left:354.80px;transform:scaleX(1.0);transform-origin:0 50%;">Merge &amp; Center</div>
<div class="arr" style="left:416.10px;top:70.85px;border-left-width:2.1px;border-right-width:2.1px;border-top-width:2.3px;border-top-color:#4f648c"></div>
<div class="wbox" style="left:430.3px;top:44.4px;width:89.20px;height:15.00px;background:#f4f8fd;"></div>
<div class="t" style="top:47.29px;font-size:8.4px;color:#222;left:432.00px;transform:scaleX(0.95);transform-origin:0 50%;">General</div>
<div class="arr" style="left:512.20px;top:50.85px;border-left-width:2.1px;border-right-width:2.1px;border-top-width:2.3px;border-top-color:#4f648c"></div>
<div class="box" style="left:430.3px;top:64.3px;width:55.70px;height:15.40px;"></div>
<div class="t" style="top:67.37px;font-size:9.6px;color:#222;font-weight:bold;left:431.90px;width:12px;text-align:center;transform:scaleX(0.95);transform-origin:50% 50%;">$</div>
<div class="arr" style="left:447.30px;top:70.85px;border-left-width:2.1px;border-right-width:2.1px;border-top-width:2.3px;border-top-color:#4f648c"></div>
<div class="t" style="top:67.23px;font-size:10.6px;color:#1a1a1a;left:455.00px;width:14px;text-align:center;transform:scaleX(0.86);transform-origin:50% 50%;">%</div>
<div class="t" style="top:64.86px;font-size:10.5px;color:#111;font-weight:bold;left:473.40px;width:10px;text-align:center;transform:scaleX(0.95);transform-origin:50% 50%;font-family:'Liberation Serif',serif;">,</div>
<div class="box" style="left:488.4px;top:64.3px;width:31.10px;height:15.40px;"></div>
<svg style="left:490.5px;top:66px" width="28" height="12" viewBox="0 0 28 12"><g font-family="Liberation Sans" font-weight="bold" fill="#222" font-size="6.3"><text x="6.4" y="5.4">.0</text><text x="2.2" y="11.2">.00</text><text x="17.4" y="5.4">.00</text><text x="21.4" y="11.2">.0</text></g><path d="M5.4,3 H2.4" stroke="#3565c8" stroke-width="0.9"/><path d="M0.8,3 L3,1.4 V4.6 Z" fill="#3565c8"/><path d="M15.6,8.8 H18.6" stroke="#3565c8" stroke-width="0.9"/><path d="M20.4,8.8 L18.2,7.2 V10.4 Z" fill="#3565c8"/></svg>
<svg style="left:539.5px;top:41.3px" width="23" height="21" viewBox="0 0 23 21"><rect x="0.6" y="0.6" width="18.8" height="17.6" fill="#fdfdfe" stroke="#a3b0c8" stroke-width="0.7"/><rect x="5.3" y="0.6" width="4.7" height="4.4" fill="#e8412c"/><rect x="5.3" y="5" width="9.4" height="4.4" fill="#4c7fdc"/><rect x="5.3" y="9.4" width="4.7" height="4.4" fill="#e8412c"/><rect x="10" y="9.4" width="2.6" height="4.4" fill="#f0907f"/><rect x="5.3" y="13.8" width="4.7" height="4.4" fill="#4c7fdc"/><path d="M0.6,5 H19.4 M0.6,9.4 H19.4 M0.6,13.8 H19.4 M5.3,0.6 V18.2 M10,0.6 V18.2 M14.7,0.6 V18.2" stroke="#a3b0c8" stroke-opacity="0.75" stroke-width="0.6"/><rect x="11.4" y="11.2" width="10.6" height="9" rx="0.8" fill="#59606d" stroke="#353b47" stroke-width="0.6"/><path d="M14,14 L17,15.4 L14,16.8 M19.6,14 L16.8,15.4 L19.6,16.8 M13.8,18.4 H16.8 M17,18.4 H19.8" fill="none" stroke="#ffffff" stroke-width="0.8"/></svg>
<div class="t" style="top:65.49px;font-size:8.4px;color:#1f3f80;left:516.60px;width:70px;text-align:center;transform:scaleX(0.95);transform-origin:50% 50%;">Conditional</div>
<div class="t" style="top:74.79px;font-size:8.4px;color:#1f3f80;left:513.40px;width:70px;text-align:center;transform:scaleX(0.95);transform-origin:50% 50%;">Formatting</div>
<div class="arr" style="left:570.10px;top:78.45px;border-left-width:2.1px;border-right-width:2.1px;border-top-width:2.3px;border-top-color:#4f648c"></div>
<svg style="left:583.6px;top:41.3px" width="23" height="21" viewBox="0 0 23 21"><rect x="0.6" y="0.6" width="19.4" height="17.6" fill="#fdfdfe" stroke="#a3b0c8" stroke-width="0.7"/><rect x="5.4" y="5" width="14.6" height="13.2" fill="#a6bff0"/><path d="M0.6,5 H20 M5.4,0.6 V18.2 M10.3,0.6 V5 M15.2,0.6 V5 M0.6,9.4 H5.4 M0.6,13.8 H5.4" stroke="#a3b0c8" stroke-opacity="0.8" stroke-width="0.6"/><path d="M5.4,9.4 H20 M5.4,13.8 H20 M10.3,5 V18.2 M15.2,5 V18.2" stroke="#ffffff" stroke-width="0.8"/><path d="M20.6,3 L22.2,4.4 L14.6,14.2 L13,12.8 Z" fill="#c79c62" stroke="#8b6a3c" stroke-width="0.4"/><path d="M13,12.8 L14.8,14.4 C13.6,17.6 10.6,19.6 8.2,19.4 C10.2,17.8 11,15 13,12.8 Z" fill="#3569c9"/></svg>
<div class="t" style="top:65.49px;font-size:8.4px;color:#1f3f80;left:564.50px;width:60px;text-align:center;transform:scaleX(0.95);transform-origin:50% 50%;">Format</div>
<div class="t" style="top:74.79px;font-size:8.4px;color:#1f3f80;left:562.00px;width:60px;text-align:center;transform:scaleX(0.95);transform-origin:50% 50%;">as Table</div>
<div class="arr" style="left:608.20px;top:78.45px;border-left-width:2.1px;border-right-width:2.1px;border-top-width:2.3px;border-top-color:#4f648c"></div>
<svg style="left:617px;top:41.3px" width="23" height="21" viewBox="0 0 23 21"><rect x="0.6" y="0.6" width="19.6" height="17" fill="#fdfdfe" stroke="#a3b0c8" stroke-width="0.7"/><path d="M0.6,3.8 H20.2 M0.6,14.4 H20.2 M4,0.6 V17.6 M16.8,0.6 V17.6 M0.6,7.3 H4 M0.6,10.8 H4 M16.8,7.3 H20.2 M16.8,10.8 H20.2 M8.3,0.6 V3.8 M12.6,0.6 V3.8 M8.3,14.4 V17.6 M12.6,14.4 V17.6" stroke="#a3b0c8" stroke-opacity="0.7" stroke-width="0.6"/><rect x="4" y="3.8" width="12.8" height="10.6" fill="#a9c1f0" stroke="#6288da" stroke-width="0.7"/><path d="M20.6,3 L22.2,4.4 L15.2,13.6 L13.6,12.2 Z" fill="#c79c62" stroke="#8b6a3c" stroke-width="0.4"/><path d="M13.6,12.2 L15.4,13.8 C14.2,17 11.2,19 8.8,18.8 C10.8,17.2 11.6,14.4 13.6,12.2 Z" fill="#3569c9"/></svg>
<div class="t" style="top:65.49px;font-size:8.4px;color:#1f3f80;left:603.20px;width:50px;text-align:center;transform:scaleX(0.95);transform-origin:50% 50%;">Cell</div>
<div class="t" style="top:74.79px;font-size:8.4px;color:#1f3f80;left:601.00px;width:50px;text-align:center;transform:scaleX(0.95);transform-origin:50% 50%;">Styles</div>
<div class="arr" style="left:637.50px;top:78.45px;border-left-width:2.1px;border-right-width:2.1px;border-top-width:2.3px;border-top-color:#4f648c"></div>
<svg style="left:654px;top:41.6px" width="23" height="20" viewBox="0 0 23 20"><rect x="1" y="1" width="9.6" height="3.6" fill="#fbfcfe" stroke="#a9b3c4" stroke-width="0.6"/><path d="M5.8,1 V4.6" stroke="#a9b3c4" stroke-width="0.6"/><rect x="1" y="11.6" width="9.6" height="7" fill="#fbfcfe" stroke="#a9b3c4" stroke-width="0.6"/><path d="M5.8,11.6 V18.6 M1,15.1 H10.6" stroke="#a9b3c4" stroke-width="0.6"/><rect x="11.4" y="6" width="10.4" height="4.2" fill="#6d97e6" stroke="#4372cc" stroke-width="0.6"/><path d="M16.6,6 V10.2" stroke="#b9cdf5" stroke-width="0.6"/><path d="M10.6,8.1 H6.6" stroke="#3c4350" stroke-width="0.8"/><path d="M5,8.1 L7,6.8 V9.4 Z" fill="#3c4350"/></svg>
<div class="t" style="top:65.39px;font-size:8.4px;color:#1f3f80;left:640.60px;width:50px;text-align:center;transform:scaleX(0.95);transform-origin:50% 50%;">Insert</div>
<div class="arr" style="left:663.30px;top:77.85px;border-left-width:2.1px;border-right-width:2.1px;border-top-width:2.3px;border-top-color:#4f648c"></div>
<svg style="left:685.6px;top:41.6px" width="20" height="20" viewBox="0 0 20 20"><rect x="1" y="1" width="9.6" height="3.6" fill="#fbfcfe" stroke="#a9b3c4" stroke-width="0.6"/><path d="M5.8,1 V4.6" stroke="#a9b3c4" stroke-width="0.6"/><rect x="1" y="11.6" width="9.6" height="7" fill="#fbfcfe" stroke="#a9b3c4" stroke-width="0.6"/><path d="M5.8,11.6 V18.6 M1,15.1 H10.6" stroke="#a9b3c4" stroke-width="0.6"/><rect x="4" y="6.2" width="7" height="3.8" fill="#e6ebf4" stroke="#bac3d3" stroke-width="0.5"/><path d="M10.6,4.4 L16.6,10.6 M16.8,4.6 L10.2,11" stroke="#e8392b" stroke-width="1.5" stroke-linecap="round"/></svg>
<div class="t" style="top:65.39px;font-size:8.4px;color:#1f3f80;left:670.00px;width:50px;text-align:center;transform:scaleX(0.95);transform-origin:50% 50%;">Delete</div>
<div class="arr" style="left:692.80px;top:77.85px;border-left-width:2.1px;border-right-width:2.1px;border-top-width:2.3px;border-top-color:#4f648c"></div>
<svg style="left:713px;top:41.2px" width="23" height="21" viewBox="0 0 23 21"><rect x="1" y="2.4" width="20.6" height="15" fill="#fbfcfe" stroke="#9aa5b8" stroke-width="0.7"/><rect x="3.4" y="17.4" width="9" height="2.4" fill="#f3f5f9" stroke="#9aa5b8" stroke-width="0.6"/><path d="M6.4,2.4 V17.4 M12.6,2.4 V17.4 M16.6,2.4 V17.4 M1,5.6 H21.6 M1,13.2 H21.6" stroke="#b9c2d2" stroke-width="0.6"/><rect x="6.8" y="6" width="5.6" height="7" fill="#5f8be3"/><path d="M1,1 H21.6 M1,0.2 V1.8 M6.4,0.2 V1.8 M12.6,0.2 V1.8 M21.6,0.2 V1.8" stroke="#3c4350" stroke-width="0.6"/></svg>
<div class="t" style="top:65.39px;font-size:8.4px;color:#1f3f80;left:699.00px;width:50px;text-align:center;transform:scaleX(0.95);transform-origin:50% 50%;">Format</div>
<div class="arr" style="left:722.20px;top:77.85px;border-left-width:2.1px;border-right-width:2.1px;border-top-width:2.3px;border-top-color:#4f648c"></div>
<div class="t" style="top:41.43px;font-size:10.6px;color:#111;font-weight:bold;left:750.60px;transform:scaleX(0.95);transform-origin:0 50%;font-family:'Liberation Serif',serif;">Σ</div>
<div class="t" style="top:41.49px;font-size:8.4px;color:#1f3f80;left:762.40px;transform:scaleX(0.95);transform-origin:0 50%;">AutoSum</div>
<div class="arr" style="left:798.30px;top:45.45px;border-left-width:2.1px;border-right-width:2.1px;border-top-width:2.3px;border-top-color:#4f648c"></div>
<svg style="left:750px;top:56px" width="10" height="11.4" viewBox="0 0 10 11.4"><rect x="0.5" y="0.5" width="8.6" height="10.2" fill="#f0f4fb" stroke="#7f90ad" stroke-width="0.7"/><rect x="1.6" y="1.6" width="6.4" height="8" fill="#cfe0fa"/><path d="M4.8,2.4 V6" stroke="#2b5cc4" stroke-width="1.8"/><path d="M2.2,5.6 H7.4 L4.8,8.8 Z" fill="#2b5cc4"/></svg>
<div class="t" style="top:56.69px;font-size:8.4px;color:#1f3f80;left:762.40px;transform:scaleX(0.95);transform-origin:0 50%;">Fill</div>
<div class="arr" style="left:775.10px;top:60.65px;border-left-width:2.1px;border-right-width:2.1px;border-top-width:2.3px;border-top-color:#4f648c"></div>
<svg style="left:749.6px;top:72.8px" width="11" height="10" viewBox="0 0 11 10"><path d="M1,6 L6,1 L10,4.2 L5.6,8.4 H2.8 Z" fill="#f7f8fb" stroke="#676e7c" stroke-width="0.7"/><path d="M1,6 L3.6,3.4 L7.6,6.6 L5.6,8.4 H2.8 Z" fill="#d9dde6" stroke="#676e7c" stroke-width="0.5"/><path d="M1.4,9.2 H10" stroke="#676e7c" stroke-width="0.7"/></svg>
<div class="t" style="top:72.19px;font-size:8.4px;color:#1f3f80;left:762.40px;transform:scaleX(0.95);transform-origin:0 50%;">Clear</div>
<div class="arr" style="left:783.10px;top:76.05px;border-left-width:2.1px;border-right-width:2.1px;border-top-width:2.3px;border-top-color:#4f648c"></div>
<svg style="left:808.6px;top:41.2px" width="23" height="21" viewBox="0 0 23 21"><defs><linearGradient id="fn" x1="0" y1="0" x2="1" y2="0"><stop offset="0" stop-color="#d9dce2"/><stop offset="1" stop-color="#8d929c"/></linearGradient></defs><path d="M7.6,3.4 H22 L16.8,10 V18.2 L13.6,20 V10 Z" fill="url(#fn)" stroke="#70757f" stroke-width="0.6"/><path d="M9.6,4.4 H20 L16.2,9.2 H13.6 Z" fill="#eceef2"/><text x="0.2" y="9.8" font-size="12.4" font-family="Liberation Serif" font-weight="bold" fill="#2f55b4">A</text><text x="0.6" y="20.2" font-size="12.4" font-family="Liberation Serif" font-weight="bold" fill="#b33a32">Z</text></svg>
<div class="t" style="top:65.49px;font-size:8.4px;color:#1f3f80;left:794.60px;width:50px;text-align:center;transform:scaleX(0.95);transform-origin:50% 50%;">Sort &amp;</div>
<div class="t" style="top:74.79px;font-size:8.4px;color:#1f3f80;left:791.60px;width:50px;text-align:center;transform:scaleX(0.95);transform-origin:50% 50%;">Filter</div>
<div class="arr" style="left:827.20px;top:78.45px;border-left-width:2.1px;border-right-width:2.1px;border-top-width:2.3px;border-top-color:#4f648c"></div>
<svg style="left:838.4px;top:41.4px" width="21" height="20" viewBox="0 0 21 20"><defs><linearGradient id="bn" x1="0" y1="0" x2="1" y2="0"><stop offset="0" stop-color="#c9d6ee"/><stop offset="0.35" stop-color="#7f9ad2"/><stop offset="1" stop-color="#3a5aa4"/></linearGradient><linearGradient id="bn2" x1="0" y1="0" x2="0" y2="1"><stop offset="0" stop-color="#b9c8e6"/><stop offset="1" stop-color="#5571b4"/></linearGradient></defs><path d="M4,1 H8 V4.6 H4 Z M12.6,1 H16.6 V4.6 H12.6 Z" fill="url(#bn2)" stroke="#3b528f" stroke-width="0.5"/><path d="M3.2,4.6 H8.8 L10,10.6 V18.2 H1 V10.6 Z" fill="url(#bn)" stroke="#34498a" stroke-width="0.6"/><path d="M11.8,4.6 H17.4 L19.6,10.6 V18.2 H10.6 V10.6 Z" fill="url(#bn)" stroke="#34498a" stroke-width="0.6"/><rect x="8.6" y="6.2" width="3.4" height="4.4" fill="#6782c0" stroke="#34498a" stroke-width="0.5"/><path d="M1.4,11 H9.8 M11,11 H19.4 M1.4,14.4 H9.8 M11,14.4 H19.4" stroke="#dbe5f6" stroke-width="0.6" opacity="0.85"/></svg>
<div class="t" style="top:65.49px;font-size:8.4px;color:#1f3f80;left:823.70px;width:50px;text-align:center;transform:scaleX(0.95);transform-origin:50% 50%;">Find &amp;</div>
<div class="t" style="top:74.79px;font-size:8.4px;color:#1f3f80;left:821.20px;width:50px;text-align:center;transform:scaleX(0.95);transform-origin:50% 50%;">Select</div>
<div class="arr" style="left:858.70px;top:78.45px;border-left-width:2.1px;border-right-width:2.1px;border-top-width:2.3px;border-top-color:#4f648c"></div>
<!-- ===== formula bar ===== -->
<div id="fbar"></div>
<div id="fgap"></div>
<div id="namebox"></div>
<div id="fhandle"></div>
<div id="finput"></div>
<div id="fexp"></div>
<div class="t c" style="left:29px;top:102.8px;width:40px;color:#000;font-size:9.3px">A1</div>
<div class="arr" style="left:102.0px;top:106.9px;border-top-color:#111;border-left-width:2.6px;border-right-width:2.6px;border-top-width:2.9px"></div>

<svg style="left:112px;top:100px" width="60" height="16" viewBox="0 0 60 16">
<circle cx="6.9" cy="7.4" r="2.2" fill="#cbbfc2" opacity="0.8"/>
<text x="46.8" y="11.2" font-size="9.6" font-family="Liberation Serif" font-style="italic" fill="#3a4b6e" font-weight="bold">f</text>
<text x="49.8" y="11.8" font-size="6.2" font-family="Liberation Serif" font-style="italic" fill="#3a4b6e" font-weight="bold">x</text>
</svg>
<svg style="left:886px;top:101px" width="10" height="14" viewBox="0 0 10 14">
<path d="M2.8,3.6 L5,5.8 L7.2,3.6 M2.8,7 L5,9.2 L7.2,7" fill="none" stroke="#1a1a1a" stroke-width="1.25"/>
</svg>

<!-- ===== scrollbars / sheet tabs ===== -->
<div id="vsb"></div>
<div id="vthumb"></div>
<div id="tabbar"></div>
<div id="tabnav"></div>
<div id="hthumb"></div>
<div id="corner"></div>

<!-- vertical scrollbar parts -->
<div style="left:886.4px;top:119.4px;width:9.6px;height:2.8px;background:#f4f7fb;border:0.6px solid #8aa0c8;border-radius:1px"></div>
<svg style="left:885px;top:123.2px" width="11" height="12" viewBox="0 0 11 12"><path d="M2.8,7.6 L5.8,4.4 L8.8,7.6 Z" fill="#46597f"/></svg>
<svg style="left:885px;top:654px" width="11" height="12" viewBox="0 0 11 12"><path d="M2.6,4.4 L5.8,7.8 L9,4.4 Z" fill="#3c4f74"/></svg>
<svg id="vgrip" style="left:887px;top:376px" width="8" height="8" viewBox="0 0 8 8"><path d="M1.4,2 H6.6 M1.4,3.6 H6.6 M1.4,5.2 H6.6" stroke="#8d9bb6" stroke-width="0.7"/></svg>
<!-- tab nav arrows -->
<svg style="left:0px;top:665.6px" width="44" height="13" viewBox="0 0 44 13">
<g fill="#2a4f9c"><path d="M8.6,3.6 L5.6,6.4 L8.6,9.2 Z"/><rect x="4.4" y="3.6" width="1" height="5.6"/>
<path d="M18.4,3.6 L15.4,6.4 L18.4,9.2 Z"/>
<path d="M25.6,3.6 L28.6,6.4 L25.6,9.2 Z"/>
<path d="M35.4,3.6 L38.4,6.4 L35.4,9.2 Z"/><rect x="38.6" y="3.6" width="1" height="5.6"/></g>
</svg>
<!-- sheet tabs -->
<svg style="left:40px;top:665px" width="170" height="13.2" viewBox="0 0 170 13.2" font-family="Liberation Sans">
<defs><linearGradient id="stg" x1="0" y1="0" x2="0" y2="1"><stop offset="0" stop-color="#c3d6f0"/><stop offset="0.5" stop-color="#d5e2f5"/><stop offset="1" stop-color="#dde8f7"/></linearGradient></defs>
<path d="M3,0.8 H163.7 L157.7,12.6 H3 Z" fill="url(#stg)"/>
<path d="M3.6,0.4 H52.2 L46.2,12.4 H3.6 Z" fill="#ffffff"/>
<path d="M52.2,0.9 H163.7" stroke="#7f9bcb" stroke-width="0.8" fill="none"/>
<path d="M52.4,0.6 L46.2,12.4 M94.6,0.8 L88.4,12.4 M136.8,0.8 L130.6,12.4 M163.9,0.8 L157.7,12.4" stroke="#7189b8" stroke-width="0.8" fill="none"/>
<path d="M3.6,12.3 H46.2" stroke="#6f88b8" stroke-width="0.8"/>
<path d="M46.2,12.5 H157.7" stroke="#9db4da" stroke-width="0.6"/>
<text transform="translate(25.6 10.3) scale(1.0 1)" font-size="9.2" font-weight="bold" fill="#1e3f82" text-anchor="middle">Sheet1</text>
<text transform="translate(67.9 10.1) scale(0.97 1)" font-size="8.6" fill="#2a4f9c" text-anchor="middle">Sheet2</text>
<text transform="translate(109.8 10.1) scale(0.97 1)" font-size="8.6" fill="#2a4f9c" text-anchor="middle">Sheet3</text>
<rect x="140.4" y="4.4" width="6.8" height="5.4" fill="#f6f8fc" stroke="#6d86b4" stroke-width="0.7"/><circle cx="139.8" cy="4.2" r="1.6" fill="#f2b52b"/>
</svg>
<!-- hscroll parts -->
<div style="left:530.6px;top:667px;width:3.4px;height:11px;background:#e4ebf5;border:0.6px solid #7f96c0;border-radius:1px"></div>
<svg style="left:536px;top:666px" width="12" height="13" viewBox="0 0 12 13"><path d="M7.4,3.4 L4,6.6 L7.4,9.8 Z" fill="#3c4f74"/></svg>
<svg style="left:868px;top:666px" width="12" height="13" viewBox="0 0 12 13"><path d="M4.6,3.4 L8,6.6 L4.6,9.8 Z" fill="#3c4f74"/></svg>
<div style="left:881px;top:667px;width:3.2px;height:11px;background:#e4ebf5;border:0.6px solid #7f96c0;border-radius:1px"></div>
<svg style="left:680px;top:669px" width="8" height="8" viewBox="0 0 8 8"><path d="M2,1 V6.4 M3.6,1 V6.4 M5.2,1 V6.4" stroke="#8d9bb6" stroke-width="0.7"/></svg>

<!-- ===== status bar ===== -->
<div id="status"></div>
<div class="t" style="left:5.4px;top:680.2px;color:#1e3f82;font-size:8.5px;transform:scaleX(0.94);transform-origin:0 50%">Ready</div>

<div style="left:32.2px;top:679.4px;width:0.7px;height:13px;background:#9db6dc;box-shadow:0.7px 0 0 #e6eefa"></div>
<svg style="left:724px;top:678.6px" width="172" height="14" viewBox="0 0 172 14" font-family="Liberation Sans">
<rect x="4.2" y="1.4" width="12.6" height="11.6" rx="1" fill="#fbd27a" stroke="#d9a33c" stroke-width="0.7"/>
<rect x="6.8" y="3.8" width="7.4" height="6.6" fill="#fdf6e2" stroke="#8f7a4a" stroke-width="0.6"/><path d="M6.8,6 H14.2 M6.8,8.2 H14.2 M9.2,3.8 V10.4 M11.6,3.8 V10.4" stroke="#8f7a4a" stroke-width="0.5"/>
<rect x="19.6" y="2.8" width="9" height="8.6" fill="#e9eef6" stroke="#7a859b" stroke-width="0.7"/><rect x="21.6" y="4.8" width="5" height="4.6" fill="#aab4c6"/>
<rect x="32.6" y="2.8" width="9" height="8.6" fill="#e9eef6" stroke="#7a859b" stroke-width="0.7"/><path d="M37.1,2.8 V8.4 M32.6,8.4 H41.6" stroke="#69748a" stroke-width="0.8"/>
<text transform="translate(59.2 10.6) scale(0.95 1)" font-size="8.5" fill="#1e3f82" text-anchor="middle">100%</text>
<circle cx="81" cy="7.2" r="4" fill="#e8eff9" stroke="#5b6f96" stroke-width="0.8"/><path d="M78.8,7.2 H83.2" stroke="#2d3d5f" stroke-width="1.1"/>
<path d="M87,7.2 H157" stroke="#7e93ba" stroke-width="0.8"/><path d="M87,8 H157" stroke="#eef3fb" stroke-width="0.6"/>
<path d="M119.2,3.2 H123.4 V9 L121.3,11.2 L119.2,9 Z" fill="#eef2f9" stroke="#5b6f96" stroke-width="0.7"/>
<circle cx="163.4" cy="7.2" r="4" fill="#e8eff9" stroke="#5b6f96" stroke-width="0.8"/><path d="M161.2,7.2 H165.6 M163.4,5 V9.4" stroke="#2d3d5f" stroke-width="1.1"/>
</svg>


</div>
</body></html>
